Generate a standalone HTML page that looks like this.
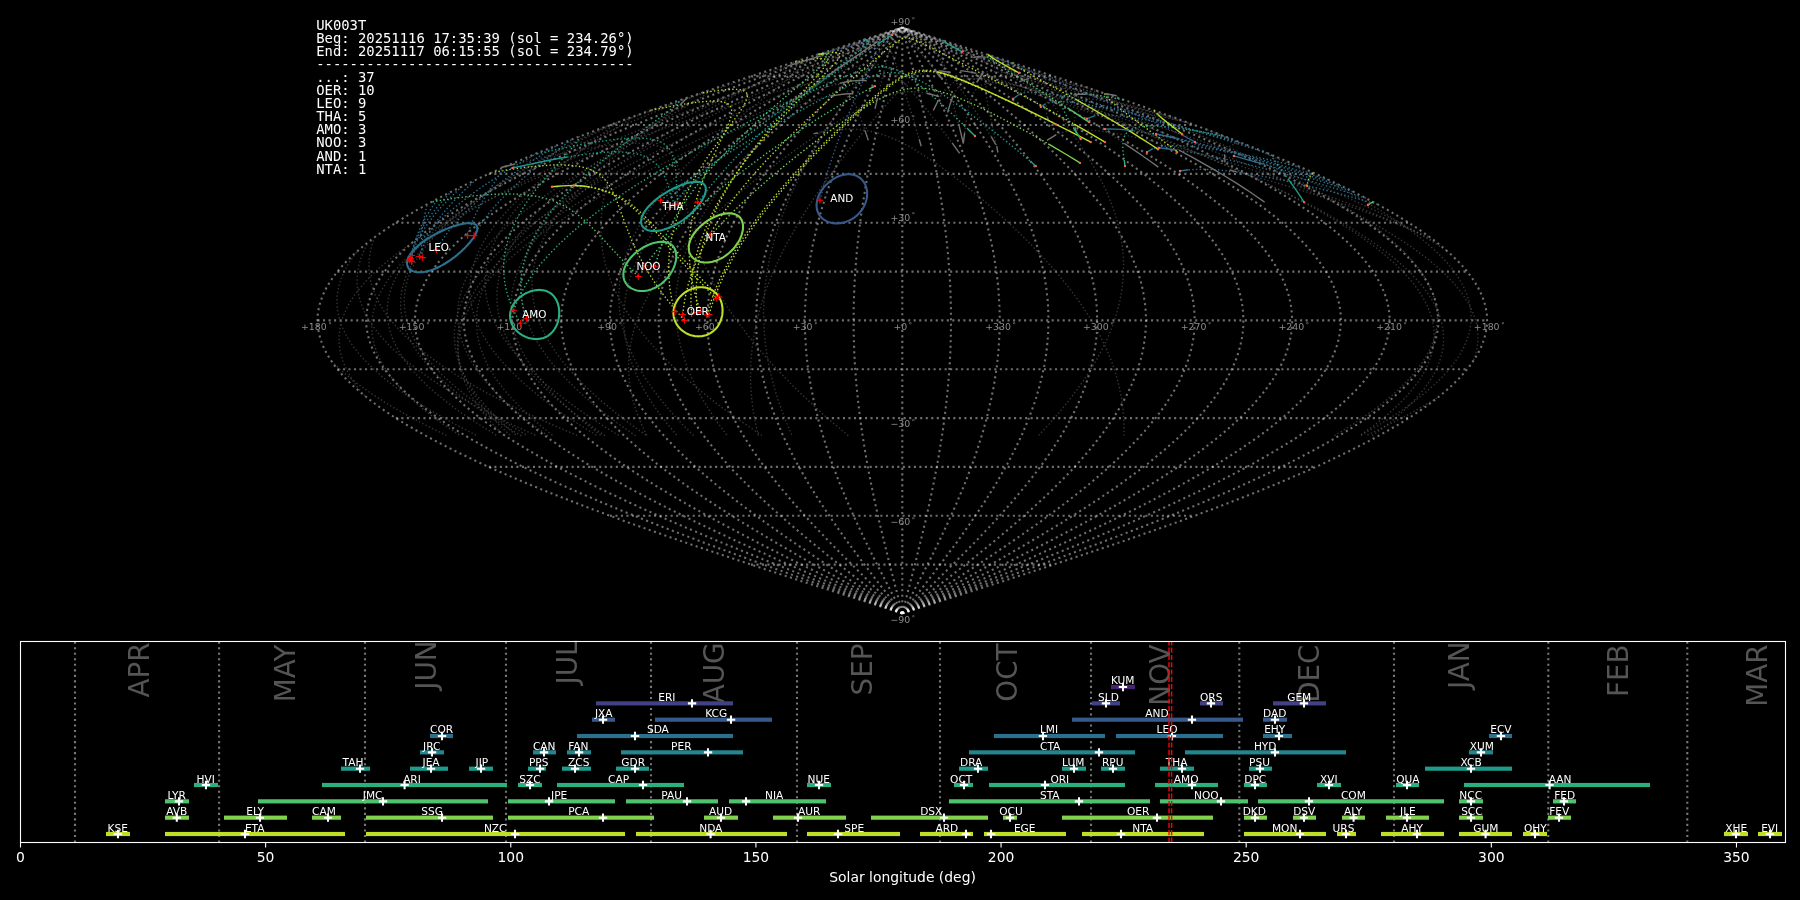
<!DOCTYPE html>
<html><head><meta charset="utf-8"><title>UK003T shower association</title>
<style>html,body{margin:0;padding:0;background:#000;overflow:hidden}svg{display:block;will-change:transform}</style></head>
<body>
<svg width="1800" height="900" viewBox="0 0 1800 900">
<rect width="1800" height="900" fill="#000"/>
<g fill="none" stroke="#fff" stroke-opacity="0.43" stroke-width="2.08" stroke-dasharray="2.08 3.44">
<path d="M902.3 613.4L1003.9 580.9L1063.5 561.3L1121.4 541.8L1176.9 522.3L1212.2 509.2L1229.3 502.7L1262.4 489.7L1278.2 483.2L1308.6 470.2L1323 463.7L1350.3 450.6L1363.1 444.1L1375.4 437.6L1387.1 431.1L1398.3 424.6L1408.8 418.1L1418.7 411.6L1427.9 405.1L1436.6 398.5L1444.5 392L1451.9 385.5L1458.5 379L1464.5 372.5L1469.7 366L1474.3 359.5L1478.2 353L1481.4 346.4L1483.9 339.9L1485.7 333.4L1486.8 326.9L1487.1 320.4L1486.8 313.9L1485.7 307.4L1483.9 300.9L1481.4 294.4L1478.2 287.8L1474.3 281.3L1469.7 274.8L1464.5 268.3L1458.5 261.8L1451.9 255.3L1444.5 248.8L1436.6 242.3L1427.9 235.7L1418.7 229.2L1408.8 222.7L1398.3 216.2L1387.1 209.7L1375.4 203.2L1363.1 196.7L1350.3 190.2L1323 177.1L1308.6 170.6L1278.2 157.6L1262.4 151.1L1229.3 138.1L1212.2 131.6L1176.9 118.5L1121.4 99L1063.5 79.5L1003.9 59.9L902.3 27.4"/>
<path d="M902.3 613.4L995.4 580.9L1050.1 561.3L1103.1 541.8L1154 522.3L1186.4 509.2L1202.1 502.7L1232.3 489.7L1246.9 483.2L1274.7 470.2L1287.9 463.7L1313 450.6L1324.7 444.1L1336 437.6L1346.7 431.1L1356.9 424.6L1366.6 418.1L1375.6 411.6L1384.1 405.1L1392 398.5L1399.3 392L1406.1 385.5L1412.1 379L1417.6 372.5L1422.5 366L1426.7 359.5L1430.2 353L1433.2 346.4L1435.4 339.9L1437.1 333.4L1438.1 326.9L1438.4 320.4L1438.1 313.9L1437.1 307.4L1435.4 300.9L1433.2 294.4L1430.2 287.8L1426.7 281.3L1422.5 274.8L1417.6 268.3L1412.1 261.8L1406.1 255.3L1399.3 248.8L1392 242.3L1384.1 235.7L1375.6 229.2L1366.6 222.7L1356.9 216.2L1346.7 209.7L1336 203.2L1324.7 196.7L1313 190.2L1287.9 177.1L1274.7 170.6L1246.9 157.6L1232.3 151.1L1202.1 138.1L1186.4 131.6L1154 118.5L1103.1 99L1050.1 79.5L995.4 59.9L902.3 27.4"/>
<path d="M902.3 613.4L986.9 580.9L1036.6 561.3L1084.9 541.8L1131.1 522.3L1160.6 509.2L1174.8 502.7L1202.3 489.7L1215.6 483.2L1240.8 470.2L1252.9 463.7L1275.6 450.6L1286.3 444.1L1296.6 437.6L1306.3 431.1L1315.6 424.6L1324.4 418.1L1332.6 411.6L1340.3 405.1L1347.5 398.5L1354.2 392L1360.3 385.5L1365.8 379L1370.8 372.5L1375.2 366L1379 359.5L1382.2 353L1384.9 346.4L1387 339.9L1388.5 333.4L1389.4 326.9L1389.7 320.4L1389.4 313.9L1388.5 307.4L1387 300.9L1384.9 294.4L1382.2 287.8L1379 281.3L1375.2 274.8L1370.8 268.3L1365.8 261.8L1360.3 255.3L1354.2 248.8L1347.5 242.3L1340.3 235.7L1332.6 229.2L1324.4 222.7L1315.6 216.2L1306.3 209.7L1296.6 203.2L1286.3 196.7L1275.6 190.2L1252.9 177.1L1240.8 170.6L1215.6 157.6L1202.3 151.1L1174.8 138.1L1160.6 131.6L1131.1 118.5L1084.9 99L1036.6 79.5L986.9 59.9L902.3 27.4"/>
<path d="M902.3 613.4L978.5 580.9L1023.2 561.3L1066.6 541.8L1108.2 522.3L1134.7 509.2L1147.6 502.7L1172.3 489.7L1184.2 483.2L1207 470.2L1217.8 463.7L1238.3 450.6L1257.1 437.6L1265.9 431.1L1274.3 424.6L1282.2 418.1L1289.6 411.6L1296.5 405.1L1303 398.5L1309 392L1314.5 385.5L1319.4 379L1323.9 372.5L1327.9 366L1331.3 359.5L1334.3 353L1336.6 346.4L1338.5 339.9L1339.8 333.4L1340.6 326.9L1340.9 320.4L1340.6 313.9L1339.8 307.4L1338.5 300.9L1336.6 294.4L1334.3 287.8L1331.3 281.3L1327.9 274.8L1323.9 268.3L1319.4 261.8L1314.5 255.3L1309 248.8L1303 242.3L1296.5 235.7L1289.6 229.2L1282.2 222.7L1274.3 216.2L1265.9 209.7L1257.1 203.2L1238.3 190.2L1217.8 177.1L1207 170.6L1184.2 157.6L1172.3 151.1L1147.6 138.1L1134.7 131.6L1108.2 118.5L1066.6 99L1023.2 79.5L978.5 59.9L902.3 27.4"/>
<path d="M902.3 613.4L970 580.9L1009.8 561.3L1048.4 541.8L1085.3 522.3L1108.9 509.2L1120.3 502.7L1142.3 489.7L1152.9 483.2L1173.1 470.2L1182.8 463.7L1201 450.6L1217.7 437.6L1225.5 431.1L1232.9 424.6L1239.9 418.1L1246.5 411.6L1252.7 405.1L1258.5 398.5L1263.8 392L1268.7 385.5L1273.1 379L1277.1 372.5L1280.6 366L1283.7 359.5L1286.3 353L1288.4 346.4L1290 339.9L1291.2 333.4L1291.9 326.9L1292.2 320.4L1291.9 313.9L1291.2 307.4L1290 300.9L1288.4 294.4L1286.3 287.8L1283.7 281.3L1280.6 274.8L1277.1 268.3L1273.1 261.8L1268.7 255.3L1263.8 248.8L1258.5 242.3L1252.7 235.7L1246.5 229.2L1239.9 222.7L1232.9 216.2L1225.5 209.7L1217.7 203.2L1201 190.2L1182.8 177.1L1173.1 170.6L1152.9 157.6L1142.3 151.1L1120.3 138.1L1108.9 131.6L1085.3 118.5L1048.4 99L1009.8 79.5L970 59.9L902.3 27.4"/>
<path d="M902.3 613.4L961.5 580.9L996.3 561.3L1030.1 541.8L1062.5 522.3L1093.1 502.7L1112.3 489.7L1121.6 483.2L1139.3 470.2L1147.7 463.7L1163.6 450.6L1178.3 437.6L1185.1 431.1L1191.6 424.6L1197.7 418.1L1203.5 411.6L1208.9 405.1L1214 398.5L1218.6 392L1222.9 385.5L1226.7 379L1230.2 372.5L1233.3 366L1236 359.5L1238.3 353L1240.1 346.4L1241.6 339.9L1242.6 333.4L1243.2 326.9L1243.4 320.4L1243.2 313.9L1242.6 307.4L1241.6 300.9L1240.1 294.4L1238.3 287.8L1236 281.3L1233.3 274.8L1230.2 268.3L1226.7 261.8L1222.9 255.3L1218.6 248.8L1214 242.3L1208.9 235.7L1203.5 229.2L1197.7 222.7L1191.6 216.2L1185.1 209.7L1178.3 203.2L1163.6 190.2L1147.7 177.1L1139.3 170.6L1121.6 157.6L1112.3 151.1L1093.1 138.1L1062.5 118.5L1030.1 99L996.3 79.5L961.5 59.9L902.3 27.4"/>
<path d="M902.3 613.4L953.1 580.9L982.9 561.3L1011.8 541.8L1039.6 522.3L1065.8 502.7L1082.3 489.7L1090.3 483.2L1105.4 470.2L1112.6 463.7L1126.3 450.6L1138.9 437.6L1144.7 431.1L1155.5 418.1L1160.5 411.6L1165.1 405.1L1169.4 398.5L1173.4 392L1177.1 385.5L1180.4 379L1183.4 372.5L1186 366L1188.3 359.5L1190.3 353L1191.9 346.4L1193.1 339.9L1194 333.4L1194.5 326.9L1194.7 320.4L1194.5 313.9L1194 307.4L1193.1 300.9L1191.9 294.4L1190.3 287.8L1188.3 281.3L1186 274.8L1183.4 268.3L1180.4 261.8L1177.1 255.3L1173.4 248.8L1169.4 242.3L1165.1 235.7L1160.5 229.2L1155.5 222.7L1144.7 209.7L1138.9 203.2L1126.3 190.2L1112.6 177.1L1105.4 170.6L1090.3 157.6L1082.3 151.1L1065.8 138.1L1039.6 118.5L1011.8 99L982.9 79.5L953.1 59.9L902.3 27.4"/>
<path d="M902.3 613.4L944.6 580.9L969.5 561.3L993.6 541.8L1016.7 522.3L1038.6 502.7L1052.3 489.7L1058.9 483.2L1071.6 470.2L1077.6 463.7L1089 450.6L1099.4 437.6L1104.3 431.1L1113.3 418.1L1121.3 405.1L1124.9 398.5L1128.2 392L1131.3 385.5L1134 379L1136.5 372.5L1138.7 366L1140.7 359.5L1142.3 353L1143.6 346.4L1144.6 339.9L1145.4 333.4L1145.8 326.9L1146 320.4L1145.8 313.9L1145.4 307.4L1144.6 300.9L1143.6 294.4L1142.3 287.8L1140.7 281.3L1138.7 274.8L1136.5 268.3L1134 261.8L1131.3 255.3L1128.2 248.8L1124.9 242.3L1121.3 235.7L1113.3 222.7L1104.3 209.7L1099.4 203.2L1089 190.2L1077.6 177.1L1071.6 170.6L1058.9 157.6L1052.3 151.1L1038.6 138.1L1016.7 118.5L993.6 99L969.5 79.5L944.6 59.9L902.3 27.4"/>
<path d="M902.3 613.4L936.2 580.9L956 561.3L975.3 541.8L993.8 522.3L1011.3 502.7L1027.6 483.2L1037.7 470.2L1042.5 463.7L1051.6 450.6L1060 437.6L1063.9 431.1L1071.1 418.1L1077.5 405.1L1080.4 398.5L1085.5 385.5L1089.7 372.5L1091.4 366L1094.3 353L1096.2 339.9L1096.8 333.4L1097.2 320.4L1096.8 307.4L1096.2 300.9L1094.3 287.8L1091.4 274.8L1089.7 268.3L1085.5 255.3L1080.4 242.3L1077.5 235.7L1071.1 222.7L1063.9 209.7L1060 203.2L1051.6 190.2L1042.5 177.1L1037.7 170.6L1027.6 157.6L1011.3 138.1L993.8 118.5L975.3 99L956 79.5L936.2 59.9L902.3 27.4"/>
<path d="M902.3 613.4L927.7 580.9L942.6 561.3L957.1 541.8L970.9 522.3L984.1 502.7L996.3 483.2L1007.5 463.7L1014.3 450.6L1020.6 437.6L1023.5 431.1L1028.9 418.1L1033.7 405.1L1035.9 398.5L1039.7 385.5L1042.8 372.5L1044.2 366L1046.3 353L1047.7 339.9L1048.1 333.4L1048.5 320.4L1048.1 307.4L1047.7 300.9L1046.3 287.8L1044.2 274.8L1042.8 268.3L1039.7 255.3L1035.9 242.3L1033.7 235.7L1028.9 222.7L1023.5 209.7L1020.6 203.2L1014.3 190.2L1007.5 177.1L996.3 157.6L984.1 138.1L970.9 118.5L957.1 99L942.6 79.5L927.7 59.9L902.3 27.4"/>
<path d="M902.3 613.4L929.2 561.3L938.8 541.8L948.1 522.3L956.8 502.7L965 483.2L972.4 463.7L977 450.6L983.1 431.1L986.7 418.1L991.3 398.5L993.9 385.5L996.9 366L998.3 353L999.5 333.4L999.8 320.4L999.5 307.4L998.3 287.8L996.9 274.8L993.9 255.3L991.3 242.3L986.7 222.7L983.1 209.7L977 190.2L972.4 177.1L965 157.6L956.8 138.1L948.1 118.5L938.8 99L929.2 79.5L902.3 27.4"/>
<path d="M902.3 613.4L915.7 561.3L925.2 522.3L929.6 502.7L933.6 483.2L937.4 463.7L939.6 450.6L942.7 431.1L944.5 418.1L946.8 398.5L948.1 385.5L949.6 366L950.3 353L950.9 333.4L951 320.4L950.9 307.4L950.3 287.8L949.6 274.8L948.1 255.3L946.8 242.3L944.5 222.7L942.7 209.7L939.6 190.2L937.4 177.1L933.6 157.6L929.6 138.1L925.2 118.5L915.7 79.5L902.3 27.4"/>
<path d="M902.3 613.4L902.3 27.4"/>
<path d="M902.3 613.4L888.9 561.3L879.4 522.3L875 502.7L871 483.2L867.2 463.7L865 450.6L861.9 431.1L860.1 418.1L857.8 398.5L856.5 385.5L855 366L854.3 353L853.7 333.4L853.6 320.4L853.7 307.4L854.3 287.8L855 274.8L856.5 255.3L857.8 242.3L860.1 222.7L861.9 209.7L865 190.2L867.2 177.1L871 157.6L875 138.1L879.4 118.5L888.9 79.5L902.3 27.4"/>
<path d="M902.3 613.4L875.4 561.3L865.8 541.8L856.5 522.3L847.8 502.7L839.6 483.2L832.2 463.7L827.6 450.6L821.5 431.1L817.9 418.1L813.3 398.5L810.7 385.5L807.7 366L806.3 353L805.1 333.4L804.8 320.4L805.1 307.4L806.3 287.8L807.7 274.8L810.7 255.3L813.3 242.3L817.9 222.7L821.5 209.7L827.6 190.2L832.2 177.1L839.6 157.6L847.8 138.1L856.5 118.5L865.8 99L875.4 79.5L902.3 27.4"/>
<path d="M902.3 613.4L876.9 580.9L862 561.3L847.5 541.8L833.7 522.3L820.5 502.7L808.3 483.2L797.1 463.7L790.3 450.6L784 437.6L781.1 431.1L775.7 418.1L770.9 405.1L768.7 398.5L764.9 385.5L761.8 372.5L760.4 366L758.3 353L756.9 339.9L756.5 333.4L756.1 320.4L756.5 307.4L756.9 300.9L758.3 287.8L760.4 274.8L761.8 268.3L764.9 255.3L768.7 242.3L770.9 235.7L775.7 222.7L781.1 209.7L784 203.2L790.3 190.2L797.1 177.1L808.3 157.6L820.5 138.1L833.7 118.5L847.5 99L862 79.5L876.9 59.9L902.3 27.4"/>
<path d="M902.3 613.4L868.4 580.9L848.6 561.3L829.3 541.8L810.8 522.3L793.3 502.7L777 483.2L766.9 470.2L762.1 463.7L753 450.6L744.6 437.6L740.7 431.1L733.5 418.1L727.1 405.1L724.2 398.5L719.1 385.5L714.9 372.5L713.2 366L710.3 353L708.4 339.9L707.8 333.4L707.4 320.4L707.8 307.4L708.4 300.9L710.3 287.8L713.2 274.8L714.9 268.3L719.1 255.3L724.2 242.3L727.1 235.7L733.5 222.7L740.7 209.7L744.6 203.2L753 190.2L762.1 177.1L766.9 170.6L777 157.6L793.3 138.1L810.8 118.5L829.3 99L848.6 79.5L868.4 59.9L902.3 27.4"/>
<path d="M902.3 613.4L860 580.9L835.1 561.3L811 541.8L787.9 522.3L766 502.7L752.3 489.7L745.7 483.2L733 470.2L727 463.7L715.6 450.6L705.2 437.6L700.3 431.1L691.3 418.1L683.3 405.1L679.7 398.5L676.4 392L673.3 385.5L670.6 379L668.1 372.5L665.9 366L663.9 359.5L662.3 353L661 346.4L660 339.9L659.2 333.4L658.8 326.9L658.6 320.4L658.8 313.9L659.2 307.4L660 300.9L661 294.4L662.3 287.8L663.9 281.3L665.9 274.8L668.1 268.3L670.6 261.8L673.3 255.3L676.4 248.8L679.7 242.3L683.3 235.7L691.3 222.7L700.3 209.7L705.2 203.2L715.6 190.2L727 177.1L733 170.6L745.7 157.6L752.3 151.1L766 138.1L787.9 118.5L811 99L835.1 79.5L860 59.9L902.3 27.4"/>
<path d="M902.3 613.4L851.5 580.9L821.7 561.3L792.8 541.8L765 522.3L738.8 502.7L722.3 489.7L714.3 483.2L699.2 470.2L692 463.7L678.3 450.6L665.7 437.6L659.9 431.1L649.1 418.1L644.1 411.6L639.5 405.1L635.2 398.5L631.2 392L627.5 385.5L624.2 379L621.2 372.5L618.6 366L616.3 359.5L614.3 353L612.7 346.4L611.5 339.9L610.6 333.4L610.1 326.9L609.9 320.4L610.1 313.9L610.6 307.4L611.5 300.9L612.7 294.4L614.3 287.8L616.3 281.3L618.6 274.8L621.2 268.3L624.2 261.8L627.5 255.3L631.2 248.8L635.2 242.3L639.5 235.7L644.1 229.2L649.1 222.7L659.9 209.7L665.7 203.2L678.3 190.2L692 177.1L699.2 170.6L714.3 157.6L722.3 151.1L738.8 138.1L765 118.5L792.8 99L821.7 79.5L851.5 59.9L902.3 27.4"/>
<path d="M902.3 613.4L843.1 580.9L808.3 561.3L774.5 541.8L742.1 522.3L711.5 502.7L692.3 489.7L683 483.2L665.3 470.2L656.9 463.7L641 450.6L626.3 437.6L619.5 431.1L613 424.6L606.9 418.1L601.1 411.6L595.7 405.1L590.6 398.5L586 392L581.7 385.5L577.9 379L574.4 372.5L571.3 366L568.6 359.5L566.3 353L564.5 346.4L563 339.9L562 333.4L561.4 326.9L561.2 320.4L561.4 313.9L562 307.4L563 300.9L564.5 294.4L566.3 287.8L568.6 281.3L571.3 274.8L574.4 268.3L577.9 261.8L581.7 255.3L586 248.8L590.6 242.3L595.7 235.7L601.1 229.2L606.9 222.7L613 216.2L619.5 209.7L626.3 203.2L641 190.2L656.9 177.1L665.3 170.6L683 157.6L692.3 151.1L711.5 138.1L742.1 118.5L774.5 99L808.3 79.5L843.1 59.9L902.3 27.4"/>
<path d="M902.3 613.4L834.6 580.9L794.8 561.3L756.2 541.8L719.3 522.3L695.7 509.2L684.3 502.7L662.3 489.7L651.7 483.2L631.5 470.2L621.8 463.7L603.6 450.6L586.9 437.6L579.1 431.1L571.7 424.6L564.7 418.1L558.1 411.6L551.9 405.1L546.1 398.5L540.8 392L535.9 385.5L531.5 379L527.5 372.5L524 366L520.9 359.5L518.3 353L516.2 346.4L514.6 339.9L513.4 333.4L512.7 326.9L512.4 320.4L512.7 313.9L513.4 307.4L514.6 300.9L516.2 294.4L518.3 287.8L520.9 281.3L524 274.8L527.5 268.3L531.5 261.8L535.9 255.3L540.8 248.8L546.1 242.3L551.9 235.7L558.1 229.2L564.7 222.7L571.7 216.2L579.1 209.7L586.9 203.2L603.6 190.2L621.8 177.1L631.5 170.6L651.7 157.6L662.3 151.1L684.3 138.1L695.7 131.6L719.3 118.5L756.2 99L794.8 79.5L834.6 59.9L902.3 27.4"/>
<path d="M902.3 613.4L826.1 580.9L781.4 561.3L738 541.8L696.4 522.3L669.9 509.2L657 502.7L632.3 489.7L620.4 483.2L597.6 470.2L586.8 463.7L566.3 450.6L547.5 437.6L538.7 431.1L530.3 424.6L522.4 418.1L515 411.6L508.1 405.1L501.6 398.5L495.6 392L490.1 385.5L485.2 379L480.7 372.5L476.7 366L473.3 359.5L470.3 353L468 346.4L466.1 339.9L464.8 333.4L464 326.9L463.7 320.4L464 313.9L464.8 307.4L466.1 300.9L468 294.4L470.3 287.8L473.3 281.3L476.7 274.8L480.7 268.3L485.2 261.8L490.1 255.3L495.6 248.8L501.6 242.3L508.1 235.7L515 229.2L522.4 222.7L530.3 216.2L538.7 209.7L547.5 203.2L566.3 190.2L586.8 177.1L597.6 170.6L620.4 157.6L632.3 151.1L657 138.1L669.9 131.6L696.4 118.5L738 99L781.4 79.5L826.1 59.9L902.3 27.4"/>
<path d="M902.3 613.4L817.7 580.9L768 561.3L719.7 541.8L673.5 522.3L644 509.2L629.8 502.7L602.3 489.7L589 483.2L563.8 470.2L551.7 463.7L529 450.6L518.3 444.1L508 437.6L498.3 431.1L489 424.6L480.2 418.1L472 411.6L464.3 405.1L457.1 398.5L450.4 392L444.3 385.5L438.8 379L433.8 372.5L429.4 366L425.6 359.5L422.4 353L419.7 346.4L417.6 339.9L416.1 333.4L415.2 326.9L414.9 320.4L415.2 313.9L416.1 307.4L417.6 300.9L419.7 294.4L422.4 287.8L425.6 281.3L429.4 274.8L433.8 268.3L438.8 261.8L444.3 255.3L450.4 248.8L457.1 242.3L464.3 235.7L472 229.2L480.2 222.7L489 216.2L498.3 209.7L508 203.2L518.3 196.7L529 190.2L551.7 177.1L563.8 170.6L589 157.6L602.3 151.1L629.8 138.1L644 131.6L673.5 118.5L719.7 99L768 79.5L817.7 59.9L902.3 27.4"/>
<path d="M902.3 613.4L809.2 580.9L754.5 561.3L701.5 541.8L650.6 522.3L618.2 509.2L602.5 502.7L572.3 489.7L557.7 483.2L529.9 470.2L516.7 463.7L491.6 450.6L479.9 444.1L468.6 437.6L457.9 431.1L447.7 424.6L438 418.1L429 411.6L420.5 405.1L412.6 398.5L405.3 392L398.5 385.5L392.5 379L387 372.5L382.1 366L377.9 359.5L374.4 353L371.4 346.4L369.2 339.9L367.5 333.4L366.5 326.9L366.2 320.4L366.5 313.9L367.5 307.4L369.2 300.9L371.4 294.4L374.4 287.8L377.9 281.3L382.1 274.8L387 268.3L392.5 261.8L398.5 255.3L405.3 248.8L412.6 242.3L420.5 235.7L429 229.2L438 222.7L447.7 216.2L457.9 209.7L468.6 203.2L479.9 196.7L491.6 190.2L516.7 177.1L529.9 170.6L557.7 157.6L572.3 151.1L602.5 138.1L618.2 131.6L650.6 118.5L701.5 99L754.5 79.5L809.2 59.9L902.3 27.4"/>
<path d="M902.3 613.4L800.7 580.9L741.1 561.3L683.2 541.8L627.7 522.3L592.4 509.2L575.3 502.7L542.2 489.7L526.4 483.2L496 470.2L481.6 463.7L454.3 450.6L441.5 444.1L429.2 437.6L417.5 431.1L406.3 424.6L395.8 418.1L385.9 411.6L376.7 405.1L368 398.5L360.1 392L352.7 385.5L346.1 379L340.1 372.5L334.9 366L330.3 359.5L326.4 353L323.2 346.4L320.7 339.9L318.9 333.4L317.8 326.9L317.5 320.4L317.8 313.9L318.9 307.4L320.7 300.9L323.2 294.4L326.4 287.8L330.3 281.3L334.9 274.8L340.1 268.3L346.1 261.8L352.7 255.3L360.1 248.8L368 242.3L376.7 235.7L385.9 229.2L395.8 222.7L406.3 216.2L417.5 209.7L429.2 203.2L441.5 196.7L454.3 190.2L481.6 177.1L496 170.6L526.4 157.6L542.2 151.1L575.3 138.1L592.4 131.6L627.7 118.5L683.2 99L741.1 79.5L800.7 59.9L902.3 27.4"/>
<path d="M750.9 564.6L1053.7 564.6"/>
<path d="M609.9 515.8L1194.7 515.8"/>
<path d="M488.8 466.9L1315.8 466.9"/>
<path d="M395.8 418.1L1408.8 418.1"/>
<path d="M337.4 369.2L1467.2 369.2"/>
<path d="M317.5 320.4L1487.1 320.4"/>
<path d="M337.4 271.6L1467.2 271.6"/>
<path d="M395.8 222.7L1408.8 222.7"/>
<path d="M488.8 173.9L1315.8 173.9"/>
<path d="M609.9 125L1194.7 125"/>
<path d="M750.9 76.2L1053.7 76.2"/>
</g>
<g font-family="'DejaVu Sans','Liberation Sans',sans-serif" font-size="9.4" fill="#8c8c8c" text-anchor="middle">
<text x="900.3" y="25.3">+90</text><text x="913.5" y="22.1" font-size="6.6">&#176;</text>
<text x="900.3" y="122.9">+60</text><text x="913.5" y="119.7" font-size="6.6">&#176;</text>
<text x="900.3" y="220.6">+30</text><text x="913.5" y="217.4" font-size="6.6">&#176;</text>
<text x="900.3" y="427.4">&#8722;30</text><text x="913.5" y="424.2" font-size="6.6">&#176;</text>
<text x="900.3" y="525.1">&#8722;60</text><text x="913.5" y="521.9" font-size="6.6">&#176;</text>
<text x="900.3" y="622.7">&#8722;90</text><text x="913.5" y="619.5" font-size="6.6">&#176;</text>
<text x="1486.7" y="330.0">+180</text><text x="1502.9" y="326.8" font-size="6.6">&#176;</text>
<text x="1389.0" y="330.0">+210</text><text x="1405.2" y="326.8" font-size="6.6">&#176;</text>
<text x="1291.3" y="330.0">+240</text><text x="1307.5" y="326.8" font-size="6.6">&#176;</text>
<text x="1193.5" y="330.0">+270</text><text x="1209.7" y="326.8" font-size="6.6">&#176;</text>
<text x="1095.8" y="330.0">+300</text><text x="1112.0" y="326.8" font-size="6.6">&#176;</text>
<text x="998.0" y="330.0">+330</text><text x="1014.2" y="326.8" font-size="6.6">&#176;</text>
<text x="900.3" y="330.0">+0</text><text x="910.5" y="326.8" font-size="6.6">&#176;</text>
<text x="802.6" y="330.0">+30</text><text x="815.8" y="326.8" font-size="6.6">&#176;</text>
<text x="704.8" y="330.0">+60</text><text x="718.0" y="326.8" font-size="6.6">&#176;</text>
<text x="607.1" y="330.0">+90</text><text x="620.3" y="326.8" font-size="6.6">&#176;</text>
<text x="509.3" y="330.0">+120</text><text x="525.5" y="326.8" font-size="6.6">&#176;</text>
<text x="411.6" y="330.0">+150</text><text x="427.8" y="326.8" font-size="6.6">&#176;</text>
<text x="313.9" y="330.0">+180</text><text x="330.1" y="326.8" font-size="6.6">&#176;</text>
</g>
<g fill="none" stroke-width="1.39" stroke-dasharray="1.39 2.29">
<path d="M1361 435.3L1377.9 425.6L1393.4 415.9L1407.7 406.2L1420.6 396.5L1432 386.8L1438 381.3L1442.1 377.1L1447.2 371.6L1450.7 367.4L1456.9 359.1L1460.4 353.5L1462.7 349.4L1465.3 343.9L1467 339.7L1468.8 334.2L1469.8 330L1470.5 325.8L1471 321.7L1471.1 317.5L1471 313.4L1470.6 309.2L1469.6 303.7L1468.6 299.5L1467.2 295.4L1465.6 291.2L1463 285.7L1458.2 277.4L1455.4 273.2L1451.2 267.7L1447.7 263.5L1442.7 258L1438.6 253.8L1432.7 248.3L1423 240L1410.4 230.3L1396.5 220.6L1381.2 210.9L1364.6 201.2L1346.8 191.5L1327.7 181.8L1307.6 172.1L1286.3 162.4L1260.8 151.4L1234 140.3L1206 129.3" stroke="#727272" stroke-opacity="0.47"/>
<path d="M602.2 127.9L641.5 114.1L686.3 99L732.3 83.9L787.5 66.2" stroke="#727272" stroke-opacity="0.47"/>
<path d="M676.6 435L667.3 423.9L658.8 412.8L651.2 401.7L645.2 392L639.3 380.9L634.3 369.8L630.2 358.7L627.5 349L625.3 337.9L624.1 328.2L623.7 318.5L623.8 312.9L624.2 307.4L625.4 297.7L627.7 286.6L631 275.5L635.2 264.4L639.7 254.7L645.7 243.6L651.6 233.8L659.3 222.8L667.9 211.7L677.2 200.6L687.4 189.5L698.3 178.4L709.9 167.3L723.8 154.8L736.9 143.7L752.2 131.2L768.2 118.7L786.7 104.9L805.9 91L827.5 75.8" stroke="#727272" stroke-opacity="0.47"/>
<path d="M510.1 435.1L503 428.6L497.7 423.4L488 412.9L483.6 407.6L479.5 402.4L475.8 397.1L472.4 391.8L469.3 386.5L466.6 381.2L464.2 375.9L462.2 370.6L460.5 365.3L459.2 360L458.3 354.6L457.8 350.7L457.5 345.3L457.5 340L457.8 336L458.5 330.7L459.5 325.4L460.9 320L462.7 314.7L464.8 309.4L469.3 300.1L472.4 294.8L475.9 289.4L479.6 284.1L483.8 278.8L488.2 273.5L493 268.2L503.6 257.6L509.4 252.3L517 245.7L530.2 235.1L546.5 223.3L564.1 211.5L583 199.8L603 188.1L624.1 176.6L651 162.6L681.5 147.7L712.6 133.2L743.9 119.4L776.9 105.5L803.1 95.3L814.2 91.2L824.7 87.7L832.6 85.3L840 83.3" stroke="#727272" stroke-opacity="0.47"/>
<path d="M503.9 435.4L497.5 429.1L492.8 424.1L484.1 413.9L480.2 408.8L476.6 403.7L473.3 398.6L470.3 393.5L467.6 388.3L465.3 383.2L463.2 378L461.5 372.8L460.2 367.6L459.2 362.5L458.5 357.3L458.2 353.4L458.1 348.2L458.4 343L459 337.8L459.7 333.9L460.9 328.7L462.5 323.5L464.4 318.3L466.6 313.1L469.2 307.9L472.1 302.7L475.3 297.5L478.9 292.3L482.8 287.1L487 281.9L496.4 271.6L507.1 261.2L512.8 256.1L520.5 249.6L535.3 238.1L551.4 226.6L568.8 215.2L587.4 203.8L606.9 192.6L629.7 180.3L655.7 167.1L684.9 153L714.4 139.5L746.1 125.8L771.8 115.4L796 106.4L814.1 100.5L823.4 97.9L830.4 96.2" stroke="#727272" stroke-opacity="0.47"/>
<path d="M1334.4 435.7L1345.8 428.7L1354.5 423.2L1370.7 412.1L1378.2 406.6L1385.2 401L1391.9 395.5L1398.1 389.9L1403.8 384.4L1409.1 378.8L1414 373.3L1418.4 367.7L1422.4 362.2L1425.9 356.6L1428.9 351.1L1431.5 345.6L1433.6 340L1435.2 334.5L1436.4 328.9L1437.1 323.4L1437.3 317.8L1437.1 312.3L1436.4 306.7L1435.2 301.2L1433.5 295.7L1431.4 290.1L1428.8 284.6L1425.7 279L1422.2 273.5L1418.2 267.9L1413.7 262.4L1408.8 256.8L1403.5 251.3L1397.7 245.7L1391.5 240.2L1384.8 234.7L1377.7 229.1L1370.2 223.6L1354 212.5L1336.2 201.4L1314.3 188.9L1293.3 177.8L1268 165.4L1244.2 154.3L1216 141.8L1186.4 129.4L1152 115.5L1116.3 101.7L1079.5 87.9L1034.2 71.4L984.7 53.8" stroke="#727272" stroke-opacity="0.47"/>
<path d="M824.2 52.4L878.8 36.5L887.2 34.5L889.1 34.3L890.4 34.3L891.3 34.6L891.8 35.1L892.1 36.8L891.9 38.8L891.2 42.4L877.5 97.9" stroke="#727272" stroke-opacity="0.47"/>
<path d="M1367.4 435L1388.9 424.6L1406.5 415.5L1423 406.3L1438.2 397.1" stroke="#727272" stroke-opacity="0.47"/>
<path d="M364.8 395.8L359.2 389.2L355.2 383.9L351.6 378.6L348.5 373.3L345.2 366.7L343.1 361.4L341.4 356.1L340.1 350.8L339.2 344.2L339 338.9L339.3 333.6L340 328.3L341.1 322.9L342.7 317.6L344.8 312.3L348 305.7L351.1 300.4L354.6 295.1L358.6 289.8L364.2 283.1L369.1 277.8L374.5 272.5L380.3 267.2L388.1 260.6L394.9 255.3L403.8 248.7L411.4 243.5L421.5 236.9L430 231.7L441 225.1L462.4 213.4L477.5 205.6L496 196.5L512.6 188.8L532.6 179.8L553.4 171L574.7 162.2L596.6 153.5L618.8 145L644.5 135.4L673.5 125L702 115.1L729.7 105.9L753.1 98.5L772 92.8L789.2 88.1L802.3 85L810 83.5L817 82.6L823.1 82.2L827.2 82.2L830.9 82.5L835.3 83.5L839 84.9L842.3 86.8L845.1 89.1L848.3 92.6L851 96.5L853.5 100.9L856.2 106.6L858.7 112.7L865 130.4" stroke="#727272" stroke-opacity="0.47"/>
<path d="M1124 435.8L1123.9 422.7L1123.1 410.5L1121.5 398L1118.9 385.3L1115.4 372.5L1111.3 360.8L1106.5 349L1100.2 336L1093.7 324.1L1085.6 311.1L1077.5 299.2L1067.7 286.2L1057.2 273.3L1045.9 260.5L1032.9 246.6L1019.3 232.9L1003.9 218.4L988 204.3L970.5 189.6L954.2 176.8L939.1 165.6L924.1 155.5L911.7 147.9L905.5 144.5L899.4 141.4L893.2 138.6L888.2 136.5L878.2 133.1L873.1 131.8L868 130.7L858.8 129.4L849.3 129L843.7 129.1L838 129.4L832.1 130.1L826.1 131L813.5 133.6" stroke="#727272" stroke-opacity="0.47"/>
<path d="M459.2 434.9L448.7 428L438.8 421.1L429.6 414.2L421 407.3L413.1 400.4L405.8 393.5L399.2 386.6L393.3 379.7L388.1 372.8L383.6 365.9L379.8 359L376.8 352.1L374.4 345.2L372.8 338.3L371.9 331.4L371.7 325.8L372 320.3L372.9 313.4L374.7 306.5L377.1 299.6L379.6 294.1L383.3 287.2L387.8 280.3L392.9 273.3L398.7 266.4L405.3 259.5L412.5 252.6L420.4 245.7L428.9 238.8L438.1 231.9L448 225L458.4 218.1L474 208.5L490.8 198.8L508.7 189.2L527.6 179.5L547.5 169.9L571.3 158.9L593.1 149.3L619 138.3L649.2 126L680.4 113.7L716 100.2L755.9 85.5L802.9 68.5L840.8 55.3L864.6 47.5L871.8 45.5L875.9 44.6L880.8 44.1L883.3 44.2L885.4 44.9L887 45.9L888.4 47.3L890.1 49.8L891.6 52.8L895.2 61.9L900.2 77.1L910.2 109.2L919.2 139.2" stroke="#727272" stroke-opacity="0.47"/>
<path d="M635.6 435.8L619.3 424.4L605.7 414.2L592.9 403.9L581.1 393.6L570.2 383.2L560.3 372.9L551.4 362.4L544.6 353.3L537.8 342.9L532.8 333.7L530.3 328.5L528.2 323.3L525.1 314.1L523.7 308.9L522.7 303.7L521.5 294.6L521.3 285.4L521.6 280.2L522.1 275L523.8 265.9L526.4 256.8L529.9 247.8L532.3 242.6L534.9 237.4L540.2 228.4L547.2 218.2L555.1 208L564 197.9L572.5 189.2L583 179.3L594.1 169.5L605.7 159.9L616.3 151.7L627 143.6L667.7 114.4L680 105" stroke="#727272" stroke-opacity="0.47"/>
<path d="M600.6 435.1L584.8 422.8L572 411.9L560.3 400.9L549.7 390L540.4 379.1L536.1 373.6L532.2 368.1L528.7 362.6L525.4 357.2L522.5 351.7L519.9 346.2L517.6 340.7L515.7 335.3L514 329.8L512.8 324.3L511.8 318.8L511.2 313.3L511 307.9L511 303.7L511.3 298.3L512 292.8L513 287.3L514.3 281.8L516 276.4L518 270.9L520.3 265.4L523 259.9L528.4 250.4L531.9 244.9L535.8 239.4L540 234L544.5 228.5L554.3 217.6L565.4 206.7L577.5 195.8L590.8 184.9L606.9 172.7L622.2 161.9L638.4 151.2L655.4 140.5L675.2 128.5L695.8 116.7L716.7 105.1L782.6 69.7L790.8 65.1L795.8 61.9" stroke="#727272" stroke-opacity="0.47"/>
<path d="M1007.6 61.2L995.4 58.8L985.8 57.3" stroke="#727272" stroke-opacity="0.47"/>
<path d="M552.4 435.1L543.6 428.2L535.3 421.2L527.5 414.3L521.7 408.8L514.9 401.8L509.8 396.3L503.9 389.3L499.6 383.8L494.7 376.9L491.2 371.3L487.4 364.4L484.7 358.8L481.9 351.9L480 346.4L478.3 339.4L477.3 333.9L476.6 326.9L476.4 321.4L476.6 315.8L477.4 308.9L478.5 303.4L480.4 296.4L482.3 290.9L485.2 283.9L488 278.4L491.9 271.5L495.5 265.9L500.4 259L504.8 253.4L510.8 246.5L515.9 240.9L522.9 234L533.4 224.3L546.7 213.2L559.4 203.5L575 192.4L591.8 181.3L609.7 170.2L628.6 159.1L651 146.6L671.9 135.5L696.4 123.1L721.7 110.6L750.8 96.7L780.8 82.9L814.4 67.7L861 47L893.8 32.8L898.3 31.1L899.8 30.9L901.1 31.2L902.1 31.9L904.2 34L908.7 39.1L934.2 69.2" stroke="#727272" stroke-opacity="0.47"/>
<path d="M758.3 435.5L755.5 423.5L753.5 412.8L751.9 400.7L751 389.9L750.5 377.8L750.7 367.1L751.3 356.3L752.4 345.5L754.1 334.7L756.2 323.9L758.9 313.1L762.4 300.9L766 290.1L770.7 278L775.9 265.9L781.6 253.8L790 237.6L799.2 221.6L810 204.2L821.6 187L834.8 168.6L849.6 149.1L864.7 130.1L880 111.9L891.1 99.3L900.1 89.8L907.1 83.3L911.2 80L914.2 77.7L917.4 75.8L920.6 74L923.9 72.7L926.2 71.9L929.8 71.1L932.3 70.8L936.3 70.6L939.2 70.7" stroke="#727272" stroke-opacity="0.47"/>
<path d="M1361.1 434.8L1375.7 424.2L1382.4 418.8L1388.8 413.5L1394.8 408.1L1400.3 402.8L1405.5 397.4L1410.2 392L1414.6 386.6L1418.5 381.3L1422 375.9L1425 370.5L1427.6 365.1L1429.8 359.7L1431.5 354.3L1432.8 348.9L1433.7 343.5L1434.1 338.1L1434.1 332.7L1433.8 328.7L1432.9 323.3L1431.7 317.9L1430 312.5L1427.8 307.1L1425.3 301.7L1422.2 296.3L1418.8 290.9L1414.9 285.5L1410.6 280.1L1405.8 274.7L1400.7 269.3L1395.1 263.9L1389.1 258.5L1382.7 253.1L1376 247.8L1368.8 242.4L1353.3 231.6L1345 226.3L1334.2 219.6L1313.3 207.6L1290.7 195.6L1266.7 183.7L1241.4 171.9L1211.8 158.8L1177.9 144.7L1139.8 129.5L1101.1 114.9L1059.8 99.9L1023.8 87.4L996.8 78.8L984.9 75.4L976.2 73.3" stroke="#727272" stroke-opacity="0.47"/>
<path d="M521.4 435.8L503.4 425.2L488.7 415.8L473.1 405.1L460.5 395.8L447.6 385L437.5 375.6L428.5 366.2L420.8 356.8L416.9 351.4L414.3 347.3L411.1 341.9L409 337.9L406.6 332.5L405 328.5L403.3 323.1L402.3 319L401.3 313.6L400.9 309.6L400.6 305.5L400.7 300.1L401 296.1L401.8 290.7L402.7 286.7L404.2 281.3L405.6 277.2L407.9 271.8L409.9 267.8L412.8 262.4L415.3 258.4L419 253L426.3 243.6L434.9 234.3L444.6 224.9L455.5 215.5L469.2 204.9L482.3 195.6L498.4 185.1L513.5 175.9L531.8 165.4L551.1 155L573.7 143.5L597 132.2L620.8 121.1" stroke="#727272" stroke-opacity="0.47"/>
<path d="M1180.3 119.9L1140.5 108.1L1097.9 96L1061.8 86.1L1033 78.8L1014.2 74.6L1005.1 72.9L999.2 72.1L994.1 71.6L989.8 71.5L986.2 71.8L983.3 72.5" stroke="#727272" stroke-opacity="0.47"/>
<path d="M605.1 435.8L588.2 423.9L574.2 413.4L561.2 402.8L549.3 392.2L538.5 381.6L528.9 370.9L524.5 365.6L520.5 360.3L514.1 350.9L510.9 345.6L508.1 340.3L505.5 334.9L503.3 329.6L501.4 324.2L499.8 318.9L498.6 313.5L497.9 309.5L497.2 304.2L497 300.2L496.9 294.8L497.1 289.5L497.6 285.5L498.4 280.2L499.6 274.8L501.1 269.5L504.4 260.2L506.8 254.9L509.5 249.6L515 240.3L518.5 235L522.4 229.7L531 219.1L540.7 208.6L551.5 198.2L563.3 187.8L574.4 178.7L587.9 168.5L602.1 158.3L618.9 147.1L632.3 138.5L645.9 130L701 97.4L709.6 92L715.5 88.1" stroke="#727272" stroke-opacity="0.47"/>
<path d="M1086 87.3L1064.5 82.9L1049.1 80.1L1036.9 78.6L1029.2 78.3" stroke="#727272" stroke-opacity="0.47"/>
<path d="M646.7 435.4L641.3 424L636.8 412.5L633.2 401L630.9 390.7L629.8 384.2L629.2 379L628.6 368.6L628.7 362.1L629 356.9L630.2 346.5L632.3 336L633.6 330.8L635.6 324.3L639.4 313.9L644.7 302.1L650.3 291.7L657.5 279.9L665.7 268.2L674.8 256.6L681.3 248.8L688.2 241.1L695.5 233.4L703.1 225.7L719.3 210.4L738 194L757.8 177.9L780 161L804.3 143.5L827.1 128.3L846.2 116.3L861.5 107.5L869 103.7L874.9 100.9L880.6 98.4L886.3 96.3L891.9 94.5L897.4 93.1L902.9 92.2L907 91.8L911.1 91.7L916.7 91.9L920.9 92.3L926.7 93.3" stroke="#727272" stroke-opacity="0.47"/>
<path d="M446.5 435.5L425.4 425L408 415.8L391.9 406.6L377 397.3L363.3 388L351 378.7L340 369.4L331.7 361.4" stroke="#727272" stroke-opacity="0.47"/>
<path d="M1473.7 360.1L1475.5 354.7L1476.5 350.7L1477.4 345.4L1477.8 341.4L1477.9 336.1L1477.7 332.1L1477.2 328.1L1476.2 322.7L1475 318.7L1473.2 313.4L1471.4 309.4L1468.7 304L1466.4 300L1462.9 294.7L1459.9 290.7L1455.6 285.4L1452.1 281.4L1447 276L1437 266.7L1425.7 257.4L1413.1 248.1L1399.3 238.8L1382 228.3L1365.7 219L1345.7 208.5L1332.5 202L1316.1 194.2L1301.8 187.7L1284.2 180L1266 172.3L1247.4 164.6L1208.8 149.5L1162.4 132.5L1115.8 116.2L1070.8 101.4L1049.7 94.9L1032.8 89.8L1012.4 84.3L997.2 80.9L989.6 79.6L984.6 79L978.6 78.7L974.7 78.9L971.2 79.4L967.2 80.5L964.6 81.7L961.7 83.8L959.7 85.6L957.4 88.4L955.5 91.5L953.3 95.8" stroke="#727272" stroke-opacity="0.47"/>
<path d="M1372.1 435.7L1381.3 429.1L1388.2 423.9L1396.2 417.3L1402.3 412L1409.3 405.4L1414.5 400.1L1419.2 394.8L1423.6 389.5L1428.4 382.9L1431.9 377.6L1434.8 372.2L1437.4 366.9L1440 360.2L1441.5 354.9L1442.7 349.6L1443.4 344.2L1443.6 338.9L1443.4 333.6L1442.8 328.2L1441.4 321.6L1439.7 316.2L1437.7 310.9L1435.1 305.5L1431.4 298.9L1427.9 293.5L1424 288.2L1419.7 282.9L1413.6 276.2L1408.4 270.9L1401.2 264.2L1395 258.9L1386.7 252.3L1375.9 244.3L1362.3 235.1L1349.8 227.1L1334.1 217.9L1317.5 208.7L1299.9 199.6L1281.5 190.5L1262.2 181.4L1242.2 172.4L1218.6 162.3L1194.3 152.2L1169.5 142.3L1144.4 132.6L1116 122.1L1088 112L1060.8 102.6L1027 91.6L1014.2 87.7L1002.4 84.4L991.6 81.8L983.9 80.2L977 79.2L970.9 78.8L965.5 78.9L960.8 79.6L956.7 80.9L954.9 81.7L952.3 83.2L948.5 86.2L945.2 89.8L941.6 94.8L938.3 100.4" stroke="#727272" stroke-opacity="0.47"/>
<path d="M496.2 435.1L478.3 424.1L461.8 413.2L446.9 402.2L435.1 392.6L428.9 387.1L423.1 381.6L414 372L409.4 366.5L405.2 361L401.4 355.5L398.9 351.3L395.9 345.8L393.3 340.3L391.2 334.8L389.9 330.7L388.6 325.2L387.9 321.1L387.3 315.6L387.2 311.4L387.3 307.3L387.9 301.8L388.9 296.3L390.4 290.8L391.8 286.7L394 281.2L396.7 275.7L399.8 270.2L402.4 266.1L406.3 260.6L409.5 256.5L414.1 251L423.2 241.3L429 235.9L435.2 230.4L446.9 220.8L461.9 209.8L478.3 198.8L496.2 187.9L515.4 177L535.9 166.1L557.6 155.2L583.3 143L610.2 130.9L638.1 118.8L670.1 105.6L702.4 92.6" stroke="#727272" stroke-opacity="0.47"/>
<path d="M1098.9 91.3L1027.2 70.5L1000.1 63L979.4 57.5L965 54L955.9 52.3L952.3 51.9L949.3 51.8L945.9 52.2L943.7 53.3L942.8 54.4L942.2 55.6L941.8 57.1L941.8 58.8L942.2 63.5L943.1 67.8L944.8 74.7L954.2 107.6L959.2 126.2" stroke="#727272" stroke-opacity="0.47"/>
<path d="M476 435.1L453.5 423.4L432.7 411.6L421.9 405.1L413.7 399.8L404 393.2L396.6 388L388 381.4L381.6 376.1L374.1 369.5L368.6 364.2L362.3 357.6L357.8 352.3L353.7 347L350 341.7L346.1 335.1L343.4 329.8L341.2 324.5L339.5 319.2L337.9 312.5L337.2 307.2L337 301.9L337.1 296.6L337.8 291.3L338.9 286L340.5 280.7L343 274.1L345.6 268.8L348.6 263.5L352.1 258.3L357 251.7" stroke="#727272" stroke-opacity="0.47"/>
<path d="M1446.2 250.4L1431.9 241.2L1416.4 232L1399.6 222.8L1379.1 212.4L1357.2 202L1334 191.7L1309.6 181.5L1284.2 171.4L1254.7 160.1L1224.3 149.1L1189.9 137.1L1155.4 125.6L1118.1 113.6L1085.6 103.7L1058.4 95.8L1034.2 89.4L1022.4 86.7L1013.8 85L1004.4 83.5L997.9 83L992.3 82.9L987.6 83.4L983.6 84.4L981.8 85.1L979.5 86.4L976.9 88.5L974.3 91.6L972.3 95.3L970.3 100.4L968.8 105.9L967.4 113L964.6 132.9" stroke="#727272" stroke-opacity="0.47"/>
<path d="M515.7 434.7L506.3 426.6L499 419.9L492.2 413.1L485.9 406.3L479.1 398.2L474.1 391.4L469.6 384.6L465.7 377.8L462.3 371.1L459.6 364.3L457.4 357.5L455.8 350.7L454.8 343.9L454.4 337.1L454.6 330.3L455.4 323.5L456.7 316.7L458.7 309.9L461.3 303.1L464.4 296.3L468.2 289.5L472.5 282.7L477.3 275.9L483.9 267.7L490 260.9L496.7 254.1L503.9 247.3L513.2 239.2L521.5 232.4L530.3 225.7L539.6 218.9L551.3 210.8L565.8 201.4L581.2 192L597.3 182.6L614.2 173.3L631.7 163.9L652.4 153.4L673.8 142.9L695.7 132.5L723.7 119.7L751.9 107.2L779.8 95.3L806.8 84.1L827 76.2L843 70.5L855.2 66.7L864 64.8L868.7 64.2L873 64L876.9 64.3L880.5 65.1L883.8 66.3L888.1 68.5L892.1 71.2L896 74.5L900.8 79.1L905.6 84.2L911.3 90.7L918.1 98.8L934.7 119.7L952.1 142.9" stroke="#727272" stroke-opacity="0.47"/>
<path d="M548.2 435.9L531 423.4L517.2 412.4L509.2 405.5L503.2 399.9L497.6 394.4L492.3 388.9L487.4 383.3L482.8 377.8L478.6 372.3L474.8 366.7L471.4 361.2L468.3 355.7L465.6 350.1L463.3 344.6L461.4 339.1L459.9 333.5L458.8 328L458 322.5L457.7 316.9L457.7 311.4L458.2 305.9L459 300.3L460.2 294.8L461.8 289.2L463.8 283.7L466.2 278.2L468.9 272.6L472.1 267.1L475.6 261.6L480.5 254.7L484.9 249.1L489.6 243.6L494.7 238.1L500.1 232.5L512 221.5L518.5 215.9L527.1 209L541.9 198L560 185.6L577.4 174.5L598.3 162.1L618 151.1L641.3 138.7L665.8 126.3L694 112.6L720.3 100.3L750.2 86.8L839.7 47.5" stroke="#727272" stroke-opacity="0.47"/>
<path d="M961.5 46.5L943.9 42.4L938.7 41.4L934.8 40.9L932.2 41L930.8 41.6L930.4 42.8L930.6 44.3L932.5 48L936.1 53.7L958.8 86.2L971.6 105.2L982.1 121.6L991.2 136.7" stroke="#727272" stroke-opacity="0.47"/>
<path d="M525.9 434.7L508 424.1L493.4 414.9L477.9 404.3L465.4 395L454 385.6L443.7 376.3L434.5 366.9L426.5 357.6L419.7 348.2L416.4 342.9L414.1 338.9L411.5 333.5L409.8 329.5L407.9 324.1L406.7 320.1L405.5 314.7L404.8 310.7L404.2 302.7L404.3 298.7L404.7 293.3L405.3 289.3L406.4 284L407.6 279.9L409.4 274.6L411.1 270.6L413.6 265.2L415.8 261.2L419 255.9L425.7 246.6L433.5 237.3L442.4 228L452.4 218.7L463.5 209.5L475.6 200.3L490.7 189.8L504.8 180.7L521.9 170.4L540 160.1L561.3 148.8L583.3 137.6L605.8 126.7" stroke="#727272" stroke-opacity="0.47"/>
<path d="M1195.8 125.5L1156.7 113.9L1118.5 103.1L1086 94.2L1056.4 86.5L1036.3 81.7L1019.4 78.4L1011.4 77.2L1006.2 76.7L1001.7 76.5L997.8 76.7L995.7 77L992.9 77.7L990.7 78.7L989 80.1L987.7 81.7L986.6 84.3L986.1 86.5L985.9 89.7L986.3 96L987.6 104.1L996.7 146.2" stroke="#727272" stroke-opacity="0.47"/>
<path d="M535.3 435.3L507.5 422.3L483.4 410.1L470.9 403.3L460.8 397.7L449.2 390.8L440 385.1L429.5 378.1L421.2 372.3L413.4 366.5L406 360.6L399.2 354.8L392.8 348.9L386.9 343L381.5 337.1L376.7 331.2L372.3 325.3L368.6 319.4L365.3 313.5L362.6 307.5L360.4 301.6L358.8 295.7L357.7 289.9L357.1 284L357.1 278.1L357.6 272.3L358.6 266.4L360.1 260.6L362.1 254.9L364.6 249.1L368.2 242.3" stroke="#727272" stroke-opacity="0.47"/>
<path d="M1434.5 241.1L1411.1 229.9L1386.1 218.8L1357 206.8L1326.8 195.3L1295.8 184.2L1261.7 172.7L1228 162L1195.3 152.4L1167.1 144.7L1143.4 139L1122 134.5L1112.2 132.8L1103.1 131.5L1094.7 130.6L1088.5 130.2L1082.7 130L1076.1 130.2L1071.2 130.6L1065.7 131.6L1060.7 132.9L1056.2 134.6" stroke="#727272" stroke-opacity="0.47"/>
<path d="M596.3 435.2L580.2 425.2L565 415.2L550.7 405L537.5 394.8L525.3 384.6L515.5 375.6L505.4 365.3L497.5 356.3L493.5 351.1L489.7 346L483.9 336.9L481.1 331.8L478.5 326.6L474.8 317.5L472.2 308.5L471.1 303.3L470.5 299.4L470.1 295.5L469.9 290.4L470 285.2L470.4 280L470.9 276.2L471.9 271L474.4 262L477.9 253L480.3 247.9L483 242.8L488.5 233.9L495.9 223.8L503.3 215L512.7 205L521.7 196.3L532.8 186.5L544.8 176.8L558.9 166.1L572 156.9L587.1 146.7L633.9 116.6" stroke="#727272" stroke-opacity="0.47"/>
<path d="M1169.1 115.8L1130 106.6L1112.6 102.9L1099.6 100.3L1088 98.4L1077.8 97L1069.2 96.3L1063.4 96.2L1058.6 96.5L1053.8 97.5L1052.3 98L1050.4 99.1L1049.3 99.9L1048 101.3L1047.4 102.3L1046.7 104L1046.2 105.9L1046.1 108L1046.4 112.5L1047.5 117.5" stroke="#727272" stroke-opacity="0.47"/>
<path d="M645.9 435.1L630 423.8L616.7 413.6L604.2 403.4L592.6 393.2L581.8 382.9L572 372.6L563.2 362.2L556.4 353.1L549.6 342.8L546.6 337.6L543.9 332.4L541.4 327.2L539.3 322L536.1 312.9L534.8 307.7L533.7 302.5L532.4 293.4L532 284.3L532.2 279.2L532.7 274L534.2 264.9L536.5 255.9L539.7 246.9L541.9 241.8L544.3 236.7L549.2 227.7L555.7 217.6L562.2 208.8L570.4 198.8L577.1 191.3L585.5 182.7L593.1 175.4L602.3 167L613.3 157.6L626 147.3L662.6 119.2L672.5 111.3L677 107.3L680.5 103.8L682.5 101.3L683.6 99.1" stroke="#727272" stroke-opacity="0.47"/>
<path d="M1119.9 98.7L1100.6 95.6L1092.6 94.7L1085.8 94.2" stroke="#727272" stroke-opacity="0.47"/>
<path d="M693.5 435.5L681.4 423.3L671.5 412.5L662.3 401.6L653.9 390.7L646.4 379.9L639.7 369L633.9 358.1L629.6 348.6L625.5 337.7L622.4 326.8L620.3 315.9L619.2 306.3L618.8 296.8L619 291.3L619.3 285.9L620.8 275L623.2 264.1L626.1 254.6L629.7 245.1L634 235.6L639 226.1L644.7 216.6L651 207.1L657.9 197.7L666.6 186.9L676 176.2L687.5 164.2L699.7 152.2L714 139.1L726 128.7L738.4 118.4L753.9 105.9L784.9 81.5L792.1 75.6L796.9 71.1L799.1 68.8L800.6 66.8L801.1 65.1L801 64.2L800.3 63.4L799.7 63.2L798.2 62.7L796 62.5L793.2 62.5" stroke="#727272" stroke-opacity="0.47"/>
<path d="M1011.4 62.6L1009 63.2L1008.2 63.9L1007.9 64.7L1008.1 65.7L1008.8 66.9L1009.9 68.2L1012.1 70.5L1017.2 74.8L1023.6 79.7L1051.7 100" stroke="#727272" stroke-opacity="0.47"/>
<path d="M1038.6 435.4L1049.2 423.9L1058.2 413.6L1067.7 401.9L1075.7 391.5L1083.1 381.1L1090 370.6L1096.3 360.2L1101.3 351L1106.4 340.5L1110.4 331.3L1114.3 320.8L1117.2 311.6L1119.8 301.1L1121.5 291.9L1122.7 282.7L1123.5 272.2L1123.6 263L1123.1 253.9L1122.1 244.8L1120.7 235.7L1118.7 226.7L1116.2 217.6L1113.3 208.7L1109.4 198.5L1105.6 189.6L1100.7 179.6L1096.1 170.9L1090.4 161.1L1080.7 145.7L1060.6 116.2L1054.2 105.9L1052.1 101.8L1050.9 98.8L1050.3 96.1L1050.4 93.8L1050.9 92.2L1051.6 91.3L1052.9 90.2L1054.2 89.6L1056.6 88.9L1058.5 88.5L1064.6 88.2L1071 88.5L1080.7 89.6L1092.3 91.3L1105.8 93.8" stroke="#727272" stroke-opacity="0.47"/>
<path d="M618.7 435.4L603.1 425.8L588.2 416L574.1 406.2L560.8 396.3L548.5 386.4L537.1 376.4L526.8 366.4L518.6 357.6L510.3 347.5L504 338.7L500.7 333.7L497.8 328.6L493.4 319.8L489.9 310.9L487.4 302.1L485.7 293.3L485.2 288.2L485 283.2L485.4 274.4L486.6 265.6L488.8 256.9L490.4 251.9L492.3 247L496.3 238.3L501.9 228.5L507.6 219.9L515 210.2L522.2 201.9L531.2 192.4L540.9 183.1L551.1 174L560.4 166.2L571.2 157.6L605.8 131.3L615.8 123.2" stroke="#727272" stroke-opacity="0.47"/>
<path d="M1187.4 122.5L1154.5 115.2L1138.7 112.1L1126.8 110.1L1116.1 108.5L1106.7 107.4L1098.7 107L1093.2 107L1088.5 107.4L1083.8 108.4L1080.1 109.9L1077.5 111.9L1075.8 114.4L1075.1 116.1L1074.7 118L1074.5 122.1L1075 126.7" stroke="#727272" stroke-opacity="0.47"/>
<path d="M726.7 434.9L717.5 422.5L710.1 411.4L703.3 400.4L697.2 389.3L691.9 378.3L687.2 367.2L683.4 356.2L680.3 345.1L678 334.1L676.4 323L675.7 312L675.7 302.3L676.4 291.2L678 280.2L680.3 269.1L683.4 258.1L686.8 248.4L690.7 238.7L695.2 229.1L700.3 219.4L705.9 209.7L712.9 198.7L719.6 189L727.8 178L737.8 165.6L749.7 151.9L762.5 138.1L777.3 123.1L790 110.8L804.5 97.3L820.8 82.6L849.7 57.1L854.6 52.6L858.6 48.6L860 46.9L860.8 45.5L860.9 44.4L860.6 43.9L860.1 43.6L858 43.4L856.5 43.4L850 44.2" stroke="#727272" stroke-opacity="0.47"/>
<path d="M955.9 44.7L957.2 46L959.4 47.5L967.5 52.4L1029 86.2L1066.8 107.8L1096.3 125.5L1111.5 135.1L1124.2 143.3" stroke="#727272" stroke-opacity="0.47"/>
<path d="M791.7 434.7L786.3 422.2L782 411.1L778.1 400L774.7 388.9L771.7 377.8L769.1 366.7L767.1 355.7L765.5 344.6L764.4 333.5L763.8 322.4L763.6 312.7L763.9 301.6L764.7 290.5L766 279.4L767.7 268.3L770 257.2L772.3 247.5L775 237.8L778.1 228.1L781.9 217L785.7 207.3L790.3 196.2L794.8 186.5L800.2 175.4L807.4 161.5L816 146.3L825.1 131L834.8 115.8L844.9 100.6L856.3 84L869.1 66L888.7 39L891.8 34.3L892.3 33.4L892.4 32.7L891.9 32.2L890.7 32.2L888.5 32.5L881.8 34" stroke="#727272" stroke-opacity="0.47"/>
<path d="M925.9 35.1L1017 73.9L1048.6 87.7L1076.4 100.1L1106.4 114L1132.4 126.4L1157.5 138.9L1178.8 150" stroke="#727272" stroke-opacity="0.47"/>
<path d="M761.9 435.5L739.7 420.4L719.6 405.8L700.5 390.7L691.4 383.1L682.6 375.3L674.2 367.6L667.3 360.9L659.6 353L653.3 346.3L646.4 338.3L640.9 331.6L634.9 323.6L630.1 316.8L624.3 307.8L619.7 299.8L615.2 290.8L611.2 281.8L608.3 274L605.6 265.1L603.6 256.3L602.1 247.6L601.4 241.1L601 233.6L600.9 226.3L601.2 219L602 210.9L603.2 202L604.6 193.5L608.1 175.9L609.3 168.1L609.6 163.7L609.6 159.7L609.2 156.6L608.3 153.7L607.4 151.7L606.4 150.2L603.9 147.6L601.7 146.2L599.7 145.2L595.1 143.7L589.3 142.6L582.2 142.1L574 142.1L564.4 142.6" stroke="#727272" stroke-opacity="0.47"/>
<path d="M1240.7 142.7L1237.9 143.2L1234.5 144.1L1231.8 145.2L1229.5 146.5L1227.7 148L1226.3 149.7L1225.3 151.6L1224.6 154.2" stroke="#727272" stroke-opacity="0.47"/>
<path d="M577.2 435.4L549.4 423.5L522.4 411.1L508.4 404.2L496.7 398.1L485.3 392.1L474.4 385.9L463.8 379.7L453.8 373.4L444.2 367.1L435.1 360.7L426.5 354.3L418.5 347.9L411 341.4L405.2 336L398.9 329.6L394 324.2L388.8 317.7L384.8 312.3L381.4 306.9L377.8 300.4L374.8 294L372.4 287.5L370.9 282.2L369.7 275.8L369.1 269.5L369 263.2L369.5 257L370.5 250.8L372 244.7L374.4 237.6" stroke="#727272" stroke-opacity="0.47"/>
<path d="M1428.4 236.6L1407.1 227.8L1385 219.1L1362.4 210.8L1336.8 201.8L1311 193.4L1285.5 185.5L1260.4 178.2L1236.2 171.7" stroke="#727272" stroke-opacity="0.47"/>
<path d="M848.3 435.7L829.4 419.8L810.9 403.1L793 385.9L777.1 369.4L762.1 352.7L754.5 343.7L748.2 335.8L736.4 320.1L730.9 312.2L725.7 304.3L718.2 291.9L711 278.5L704.6 265.2L699.3 252.1L696.6 244.5L694.1 237.1L690.1 222.5L686.7 207.4L681.5 180L679 169.6L676.9 163.9L674.3 158.7L671.4 154.7L667.8 151.3L664 148.7L660.3 147L655.2 145.3L650.2 144.3L643.4 143.5L637 143.2L629.8 143.4L620.3 144L611.5 144.9L600 146.4L576.4 150.4L547.2 156.5L515 164" stroke="#727272" stroke-opacity="0.47"/>
<path d="M691.6 313.6L690.9 301.1L691.1 289.3L692.2 276.8L694.3 264.4L697.3 251.9L701.3 239.4L706.1 226.9L712.1 213.7L716.3 205.7L720.8 197.6L725.6 189.6L730.8 181.6L736.2 173.6L742.5 164.8L749.1 156.1L756.1 147.4L768.9 132.3L783.1 116.6L799.8 99L829.6 68.9L834.8 63.3L838.3 58.9L839.7 56.4L840.1 54.7L839.9 53.9L839.5 53.5L837.8 52.7L834.7 52.5L831.3 52.7L820 54.3" stroke="#bddf26"/>
<path d="M706.9 315L709.4 306.2L712.4 297.5L715.7 288.7L719.5 280L723.7 271.2L728.7 261.7L733.6 253L739.4 243.5L745.7 234.1L752.3 224.7L759.3 215.3L766.6 205.9L774.3 196.6L782.9 186.5L791.8 176.5L801.6 165.9L813.1 154L825.6 141.5L838.3 129.2L851.8 116.6L863.8 105.7L875 96.1L884.6 88.3L892.7 82.3L898.6 78.3L904.6 75L909.8 72.7L914.6 71.3L919.4 70.4L924.6 70.1L930 70.5L936.7 71.7" stroke="#bddf26"/>
<path d="M709.1 314.5L711 308.1L713.3 300.8L718.6 287.2L724.8 273.5L732 259.8L740.1 246.2L749.7 231.7L760.1 217.3L772.2 202L787.3 184.1L803.5 166.4L822.1 147.2L841.3 128.4L861.5 109.7L878.8 94.7L885.6 89.3L892.2 84.3L898 80.4L902.9 77.5L907.8 75.1L912.8 73.2L917.9 71.9L922.3 71.4L927 71.3L933 71.9L939.4 73.2L946.2 75.1L954.9 78L964.2 81.5L975.4 86.1L988.8 92L1020.2 106.6L1056 124.3" stroke="#bddf26"/>
<path d="M682.7 314.5L683.5 307.8L684.7 300.1L686.3 292.4L688.2 284.8L690.3 278L692.9 270.4L695.9 262.7L699.2 255L702.9 247.3L706.9 239.7L711.3 232L715.9 224.3L720.9 216.6L726.9 208L732.5 200.3L739.2 191.7L752.7 175.4L768.3 158.2L786 140L805.7 120.9L831.7 97.1L863 69.7L879.2 56L890.7 46.6L896.5 42.1L901.1 39.2L903.8 38.1L905.6 37.8L907.6 37.9L909.7 38.2L912 38.9L915.8 40.5L927.9 46.1L966.1 65.5L1008.9 88L1043.9 107L1074.2 124.2" stroke="#bddf26"/>
<path d="M697.5 312.5L696.8 305.6L696.4 298.7L696.2 291.7L696.4 284.8L696.8 277.9L697.5 271L698.5 264.1L699.8 257.2L701.4 250.2L703.2 243.3L705.3 236.4L707.7 229.5L710.3 222.7L713.2 215.8L716.3 208.9L720.1 201.2L727.2 188.3L735.6 174.6L744.8 161L755.5 146.6L766.1 133.2L778.8 118.3L789.6 106.1L812.1 81.6L818.8 74L823.6 67.9L825.3 65.3L826.2 63.4L826.6 62.1L826.6 61L826.2 60.1L825.7 59.6L824.6 59L823.5 58.7L820.7 58.5L816.9 58.6L810.7 59.3L802.9 60.5L793.5 62.3" stroke="#bddf26"/>
<path d="M1011.5 62.7L1016.9 66.5L1026.7 72.3L1075.4 99.2" stroke="#bddf26"/>
<path d="M700.4 311.4L696.6 299.9L693.8 289.2L691.6 278.6L690 267.2L689.3 256.6L689.2 245.3L689.8 234.7L691.2 223.6L692.8 214.7L695 205.1L697.6 195.7L700.7 186.4L704.7 175.8L709.6 164.1L714.6 153.4L724.7 132.4L728.6 123.7L730.3 119.2L731.4 115L731.8 111.7L731.5 108.8L730.8 106.8L729.6 105.1L727.8 103.7L725.9 102.8L723 101.9L720.1 101.4L715.9 101.1L711.8 101L700.9 101.8L687.3 103.5L671.3 106.3L651.1 110.2" stroke="#bddf26"/>
<path d="M1154 110.6L1157.5 114.2" stroke="#bddf26"/>
<path d="M674.8 311.6L671.8 299.5L669.8 287.5L668.7 275.5L668.6 263.5L669.5 251.5L671.3 239.5L674 227.7L677.6 215.9L681.3 205.9L685.9 195.2L691.2 184.5L697.5 173.1L704.4 161.9L712.3 150.1L720.3 138.7L735.9 117.5L741 110.2L743.6 105.8L745.5 102.4L746.7 99.3L747.3 97L747.3 95.3L747 93.8L746.3 92.5L745.4 91.7L743.8 90.8L742.3 90.2L739.7 89.7L737.4 89.4L731.8 89.3L723.4 89.9L713.1 91.2L700.9 93.1" stroke="#bddf26"/>
<path d="M1104.7 93.4L1105.7 95.7L1107.8 98.3L1111.5 101.8L1116.2 105.8L1126.9 114L1159.1 137.8L1175 150" stroke="#bddf26"/>
<path d="M684.5 320.4L673.6 307.8L663.2 294.5L654 281.4L645.9 268.4L638.6 255.1L631.9 240.8L626.4 227L617 201.5L612.7 191.7L609.8 186.3L606.8 181.9L603.6 178.2L599.9 174.9L596.5 172.6L593.1 170.8L588.9 169L584.8 167.7L579.5 166.5L574.4 165.7L568.8 165.2L562.8 164.9L556.2 164.9L549 165.2L532 166.6L513.9 168.9L492.3 172.5" stroke="#bddf26"/>
<path d="M1312.7 172.7L1310.7 175.1L1309.2 177.7L1308 180.9L1307.3 184.5" stroke="#bddf26"/>
<path d="M716.3 298.4L704.3 286.4L692.5 273.8L678.7 258.4L649.2 224.2L640.9 215.5L633.6 208.5L628.5 204.3L623.5 200.6L618.5 197.5L613.3 194.6L607.7 192.1L602 190L596 188.3L590 187" stroke="#bddf26"/>
<path d="M718.5 296.2L705.3 282.9L692.2 269.1L680.5 256.1L658.7 231.2L650.2 221.9L640.7 212.5L636.2 208.4L631.8 204.9L625.6 200.5L619.3 196.8L612.6 193.6L605.8 191L598.4 188.8L590.8 187.3L582.6 186.2L573.8 185.5" stroke="#bddf26"/>
<path d="M411.8 255.5L415.5 249.4L419.7 243.4L424.4 237.3L429.6 231.3L435.2 225.3L441.9 218.7L448.5 212.7L456.1 206.3L464.3 199.8L472.9 193.4L481.9 187L491.3 180.7L502 173.9L512.9 167.2L536.6 153.5" stroke="#2d708e"/>
<path d="M1267 153L1220.6 138.4L1173.2 124.4L1128.2 111.8L1091.6 102.4L1077.6 99.2L1065.8 96.6L1055.2 94.6L1045.8 93.2L1037.6 92.3L1031.2 92.1L1025.8 92.4L1021 93.3" stroke="#2d708e"/>
<path d="M436.4 249.7L439.8 243.8L444 237.4L448.3 231.5L453.5 225.1L459.2 218.8L465.3 212.5L471.8 206.2L478.8 200L486.2 193.8L494.5 187.2L503.3 180.6L512.4 174.1L532.7 160.5L557.3 145.2" stroke="#2d708e"/>
<path d="M1246.6 144.8L1204.7 132.8L1164.7 122.1L1130.8 113.6L1115.3 110L1102.2 107.3L1091.2 105.2L1081.2 103.5L1072.3 102.4L1065.2 101.8L1059 101.7L1053.3 102L1048.9 102.8L1045 104.2" stroke="#2d708e"/>
<path d="M474.1 235.6L476.9 230.6L480.3 225.2L484 219.9L488 214.5L492.3 209.2L497.2 203.6L507.9 192.4L519.1 181.9L532.2 170.5L545.6 159.7L571 139.8" stroke="#2d708e"/>
<path d="M1232.7 139.5L1205.2 132.6L1180.6 126.9L1159.2 122.3L1141 118.9L1125.9 116.6L1113.1 115.3L1107.3 115L1102.5 115L1098.3 115.3L1094.2 115.8" stroke="#2d708e"/>
<path d="M410.6 258.6L411.8 254.4L413.4 249.8L417.2 241L422 232.3L427.9 223.4L435 214.1L443 205.1L452.1 195.8L462.6 186.1" stroke="#2d708e"/>
<path d="M1341.1 185.8L1310 175.8L1279.1 166.3L1247.7 157.2L1218.5 149.3L1191.9 142.6L1167.5 137L1147.1 133L1129.2 130.2" stroke="#2d708e"/>
<path d="M419.6 256.5L420.9 252.2L422.5 247.6L424.4 243L426.5 238.4L428.9 233.8L431.8 228.9L438.1 219.6L445.6 210.2L454.2 200.5L464.1 190.6L475.6 180.1" stroke="#2d708e"/>
<path d="M1328.6 179.8L1287.7 167.3L1247.8 155.9L1210.1 146.1L1192.9 141.9L1176.7 138.3" stroke="#2d708e"/>
<path d="M411.6 261.6L412.3 254.1L413.7 246.3L415.9 238.6L418.8 231.1L422.5 223.3L426.9 215.3L432 207.2L438.3 198.5" stroke="#2d708e"/>
<path d="M1365.9 198.2L1338.6 189.5L1311.5 181.4L1283.9 173.7L1258.2 166.9L1234.7 161.2L1212.8 156.4L1193.3 152.7L1175.8 150" stroke="#2d708e"/>
<path d="M467.6 235.6L469.6 228.8L472.1 222.1L475.2 215.1L478.6 208.3L485.7 195.9L499.3 174.6L503.7 167.3" stroke="#2d708e"/>
<path d="M1300.1 167.1L1271.9 160.4L1245.8 154.8L1223 150.6L1202.9 147.6L1186.8 146L1179.7 145.7L1173.2 145.7L1167.3 146L1162 146.5L1157.3 147.4L1152.7 148.7" stroke="#2d708e"/>
<path d="M422.7 257.6L421.9 251.7L421.5 245.8L421.5 239.8L421.8 233.8L422.4 227.6L423.4 221.3L427 204.6" stroke="#2d708e"/>
<path d="M1377.4 204.3L1346.1 195.5L1315.7 187.7L1287.8 181.3L1261.9 176.1L1239.9 172.5L1229.4 171.2L1220.1 170.2L1210.9 169.6L1202.8 169.3L1195.3 169.4L1188.3 169.8" stroke="#2d708e"/>
<path d="M409.8 260.2L411.7 251.9L414.5 243.7L418.2 235.3L422.8 227L428.3 218.5L435 209.8L442.4 201L451.1 191.8" stroke="#2d708e"/>
<path d="M1352.9 191.6L1330.5 184.3L1308.1 177.3L1285.9 170.6L1263.3 164.2" stroke="#2d708e"/>
<path d="M669.7 207.4L677.4 198.8L685.6 190.2L694.2 181.6L703.8 172.5L713.8 163.5L724.7 154.1L736.1 144.6L747.9 135.2L773.8 115.5L802.8 94.6L836.1 71.6L877.9 43.8" stroke="#1e9b8a"/>
<path d="M697.7 202.6L708.5 188.5L720.7 173.9L734.1 159.3L749.3 143.9L759.5 134.2L770.4 124.1L782.3 113.6L794.5 103.1L817.5 83.9L856.7 52.5L865.3 45.3L868.5 42.1L869.1 41.2L869.3 40.5L868.9 40L868 39.7L864.6 39.8" stroke="#1e9b8a"/>
<path d="M660.6 200.3L673.7 190.4L687.4 180.5L701.6 170.7L717.3 160.3L734.7 149.2L752.4 138.4L770.3 127.7L789.5 116.7L807.4 106.8L824.9 97.4L839.7 89.8L852.8 83.6L863.2 79.2L872 76L879.5 73.9L886.6 72.7L891.9 72.4L897 72.8L902.1 73.6L907.1 75.1L912.3 77L918.2 79.8L925.1 83.4L932.1 87.6L941.8 93.8L953.4 101.7L966.1 110.8L978.9 120.3L992.7 130.7L1006.3 141.4L1018.9 151.7L1031.2 162" stroke="#1e9b8a"/>
<path d="M677.7 203.7L675.7 170.3L674.6 162.6L673.2 156.7L672 153.6L670.8 151.1L669.2 148.8L667.4 146.6L665.3 144.7L663 143.2L660.5 141.9L657.6 140.7L654 139.7L649.8 138.9L645.1 138.3L640.5 138.1L629.3 138.2L615.1 139.4L598.7 141.6L580.1 144.8L558.3 149.1L534.6 154.4" stroke="#1e9b8a"/>
<path d="M1270.9 154.7L1273.3 158.7L1276.5 163.4L1287.9 178.8" stroke="#1e9b8a"/>
<path d="M674.3 205L670.4 192L667.6 183.8L664.9 177.2L662 171.6L658.6 166.7L655 162.8L650.8 159.5L645.8 156.8L639.9 154.6L633 153.1L625 152.2L616.2 151.9L606.3 152.2L594.6 153.2L581.7 154.8L567.5 157" stroke="#1e9b8a"/>
<path d="M526.4 318.8L524.5 312.7L522.9 306.7L521.8 300.6L521.1 294.6L520.7 288.5L520.8 282.5L521.2 276.4L522.3 269.6L523.6 263.5L525.3 257.5L527.3 251.5L530.2 244.7L533 238.7L536.3 232.7L539.9 226.8L544.4 220L548.7 214.1L553.4 208.3L558.3 202.4L563.6 196.6L574.9 185.1L588.1 172.9L601.2 161.8L616.8 149.4L629.7 139.8L658.7 118.6L668.8 111L676.1 104.8L678.8 102.1L680.3 100.1" stroke="#2ab07f"/>
<path d="M1123.2 99.8L1100.7 95.8L1090.7 94.5L1083.3 93.7L1077.1 93.5L1072 93.6L1068 94.2L1066.3 94.7L1064.6 95.5L1062.6 97L1062 97.9L1061.4 99.3L1061.1 102L1061.7 105.1L1063.1 109.1L1065.2 113.6L1068.5 119.6L1073.3 127.5" stroke="#2ab07f"/>
<path d="M513.7 310.7L516 304.2L518.8 297.8L522 291.3L526.3 283.9L530.5 277.5L535.2 271L540.2 264.6L546.6 257.2L552.6 250.8L559 244.3L565.8 237.9L574.1 230.5L581.8 224.1L591 216.8L600.6 209.5L610.8 202.2L621.3 194.9L632.3 187.6L656.8 172.2L684.4 156.1L713.2 140.2L748.1 122L784.9 103.7L819 87.7L832.7 81.6L844.3 76.7L853.8 73.1L862.6 70.1L869.6 68.2L875.9 67.1L881.8 66.7L886.4 67L891.6 68.1L896.6 69.9L902.3 72.8L908.1 76.4L914.7 81.2L922.3 87.3L931.8 95.4L942.3 104.8L954.7 116.4L967.1 128.3" stroke="#2ab07f"/>
<path d="M520.6 323.3L517.2 317.4L514.5 312.3L512.2 307.3L510.1 302.2L508.3 297.2L506.8 292.1L505.6 287.1L504.6 281.2L504 276.2L503.7 271.2L503.6 266.2L504 260.4L504.5 255.4L505.5 249.7L506.6 244.8L508.3 239.1L511.8 229.4L516.3 219.8L521.5 210.4L528 200.4L535.1 190.7L543.3 180.6L551.1 171.6L567.1 153.9L572.7 147.2L577.1 141.3L578.7 138.6L579.7 136.5" stroke="#2ab07f"/>
<path d="M1223.7 136.1L1207.1 132.9L1193.5 130.4L1179.7 128.3L1168.7 127L1159 126.2L1150.7 125.9L1143.6 126.3L1137.1 127.3L1132.5 128.8L1129 130.8L1127.6 131.9L1126.1 133.6L1125.1 135L1124.2 137L1123.5 139.1L1123.1 141.3L1122.7 146.3L1123.1 152.3L1124.2 160" stroke="#2ab07f"/>
<path d="M655 266.3L657.6 257L661.1 246.8L664.9 237.5L669.8 227.4L674.8 218.1L681 208L687.7 197.9L695.1 187.8L705 175.4L716.4 162.3L728.6 149.3L742.4 135.6L754.5 124.2L767.7 112.2L783.8 98.2L816.1 70.9L822 65.6L826.1 61.4L828 59.2L829 57.3L829.1 56.1L828.4 55.2L826.9 54.6L824.3 54.4L820.8 54.5L816.1 55" stroke="#4ec36b"/>
<path d="M988.8 55.2L988.5 55.6L988.6 56.4L989.2 57.4L990.2 58.5L993.4 61L998.4 64.6L1009.3 71.6L1046.7 94.7L1067.5 107.9" stroke="#4ec36b"/>
<path d="M645 265.7L652.7 255.5L661.5 244.9L671 234.3L681.3 223.7L692.8 212.7L705 201.7L718.4 190.3L732.4 179L748.7 166.5L766.2 153.6L784.8 140.6L804.2 127.5L823.6 115L841.3 104.2L855.9 95.8L868.8 89.2" stroke="#4ec36b"/>
<path d="M638.3 276.6L624.2 262L597.1 232.8L590.2 225.8L584.2 220.2L576.6 213.9L568.9 208.6L561 204.2L552.8 200.7L547.6 199L542.7 197.7L536.9 196.4L531.3 195.5L524.8 194.7L518.5 194.2L504.9 193.9L489.8 194.5L472.3 196L453.2 198.4L432.5 201.7" stroke="#4ec36b"/>
<path d="M711 235L720.7 224.4L731 213.8L742.6 202.5L754.7 191.4L768 179.7L781.7 168.1L795.7 156.8L810.8 145.1L825.9 133.8L840.2 123.6L853.4 114.6L865.5 107L875.7 101L884.9 96.3L893.1 92.8L901.3 90.2L907.2 88.9L912.4 88.2L917.6 88L923.8 88.2L929.3 89L935.9 90.3L942.7 92.2L950.7 94.9L960.1 98.5L969.8 102.7L980.9 107.9L992.4 113.5L1019.5 127.7L1048.3 143.8" stroke="#81d34d"/>
<path d="M819.9 200.3L823.9 185L828.3 169.6L833.6 153.6L839.5 136.9L846 120.3L853.4 102.4L875.6 52.6L877.6 47.1L878.2 43.9L878.1 42.8L877.8 42.2L877 41.5L876.2 41.2L873 41L868 41.7L861.1 43.2L851 45.7L815.8 55.1" stroke="#375a8c"/>
<path d="M990.9 55.7L1054.1 80.6L1101.1 99.7L1143.4 117.7L1182.1 135" stroke="#375a8c"/>
</g>
<g fill="none" stroke-width="1.39" stroke-linecap="butt">
<path d="M787.5 66.2L820.8 55.8" stroke="#727272"/>
<path d="M827.5 75.8L848.8 61.1L877.5 41.7" stroke="#727272"/>
<path d="M840 83.3L846.8 81.8L849.9 81.3L853 80.9L856 80.6L858.8 80.4L861.5 80.4L864.2 80.5L866.7 80.8" stroke="#727272"/>
<path d="M830.4 96.2L836.6 95.1L842.5 94.2L848.1 93.8L853.3 93.8" stroke="#727272"/>
<path d="M877.5 97.9L875.0 108.8" stroke="#727272"/>
<path d="M865.0 130.4L868.3 140.4" stroke="#727272"/>
<path d="M813.5 133.6L818.0 133.0" stroke="#727272"/>
<path d="M919.2 139.2L921.2 146.2" stroke="#727272"/>
<path d="M687.5 97.5L680.0 105.0" stroke="#727272"/>
<path d="M973.3 57.9L974.5 57.3L976.4 56.9L978.8 56.8L982 56.9L985.8 57.3" stroke="#727272"/>
<path d="M934.2 69.2L942.5 79.2" stroke="#727272"/>
<path d="M939.2 70.7L950.8 72.5" stroke="#727272"/>
<path d="M960.4 70.7L962.7 70.9L967.7 71.6L970.5 72.1L976.2 73.3" stroke="#727272"/>
<path d="M983.3 72.5L976.7 82.5" stroke="#727272"/>
<path d="M1019.2 81.7L1029.2 78.3" stroke="#727272"/>
<path d="M926.7 93.3L931.6 94.5L934.1 95.1L939.2 96.7" stroke="#727272"/>
<path d="M953.3 95.8L952.2 98.4L950.2 103.8L947.5 112.5" stroke="#727272"/>
<path d="M938.3 100.4L933.3 110.4" stroke="#727272"/>
<path d="M959.2 126.2L961.3 134.8L963.3 143.3" stroke="#727272"/>
<path d="M964.6 132.9L963.3 143.3" stroke="#727272"/>
<path d="M952.1 142.9L959.6 153.3" stroke="#727272"/>
<path d="M991.2 136.7L995.8 144.6" stroke="#727272"/>
<path d="M996.7 146.2L997.9 152.5" stroke="#727272"/>
<path d="M1047.0 140.4L1056.2 134.6" stroke="#727272"/>
<path d="M1047.5 117.5L1048.3 120.4" stroke="#727272"/>
<path d="M1073.3 95L1075.2 94.6L1077.4 94.3L1079.9 94.2L1082.7 94.1L1085.8 94.2" stroke="#727272"/>
<path d="M1051.7 100.0L1057.5 104.2" stroke="#727272"/>
<path d="M1105.8 93.8L1116.7 95.8" stroke="#727272"/>
<path d="M1075.0 126.7L1076.2 132.5" stroke="#727272"/>
<path d="M1124.2 143.3L1134.3 150.1L1141.7 155.2L1151.3 162L1158.3 167.1" stroke="#727272"/>
<path d="M1178.8 150L1192.9 157.7L1203.9 163.8L1214.5 169.9L1224.8 176L1237.2 183.7L1246.7 189.8L1255.8 196L1264.6 202.1" stroke="#727272"/>
<path d="M1224.6 154.2L1225.0 162.5" stroke="#727272"/>
<path d="M1229.6 170.0L1236.2 171.7" stroke="#727272"/>
<path d="M515 164L501 167.5" stroke="#727272"/>
<path d="M988.3 54.3L989.1 55.3L990.5 56.4L992.2 57.6L996.7 60.5L1005.3 65.4L1019 72.9" stroke="#bddf26"/>
<path d="M936.7 71.7L940.8 72.7L945.1 74L949.6 75.4L954.2 77.1L959.1 78.9L966.6 82L979.8 87.6L996.6 95.3L1014 103.5L1034.8 113.6L1055.8 124.2" stroke="#bddf26"/>
<path d="M1056 124.3L1073.5 133.1L1090.8 142.1" stroke="#bddf26"/>
<path d="M1074.2 124.2L1089.8 133.1L1105 142.1" stroke="#bddf26"/>
<path d="M1075.4 99.2L1088.2 106.5L1101.1 113.9L1111.3 120L1121.5 126L1131.4 132.2L1141.2 138.3L1150.8 144.5L1157.9 149.2" stroke="#bddf26"/>
<path d="M1157.5 114.2L1160.9 117.3L1167.1 122.4L1174.3 128L1182.1 134" stroke="#bddf26"/>
<path d="M1175.0 150.0L1177.1 152.1" stroke="#bddf26"/>
<path d="M1307.3 184.5L1306.9 186.0" stroke="#bddf26"/>
<path d="M590 187L584.8 186.3L582.2 186L573.8 185.5" stroke="#bddf26"/>
<path d="M573.8 185.5L568.6 185.6L563.2 185.9L557.7 186.2L552 186.7" stroke="#bddf26"/>
<path d="M1021.0 93.3L1012.9 98.9" stroke="#2d708e"/>
<path d="M1045.0 104.2L1040.8 106.9" stroke="#2d708e"/>
<path d="M1094.2 115.8L1086.9 118.8" stroke="#2d708e"/>
<path d="M1129.2 130.2L1120.2 129.4L1114.8 129.1L1109.7 129L1105 129.1" stroke="#2d708e"/>
<path d="M1176.7 138.3L1166.1 136L1156 134" stroke="#2d708e"/>
<path d="M1175.8 150L1167.2 148.8L1159.2 147.9" stroke="#2d708e"/>
<path d="M1152.7 148.7L1146.9 152.1" stroke="#2d708e"/>
<path d="M1188.3 169.8L1180.0 171.0" stroke="#2d708e"/>
<path d="M1263.3 164.2L1247.1 159.6L1233.9 155.9" stroke="#2d708e"/>
<path d="M877.9 43.8L892.1 35" stroke="#1e9b8a"/>
<path d="M942.5 39.8L942.9 40.6L944.3 41.7L946.3 43L951.8 46.2L962.1 51.8" stroke="#1e9b8a"/>
<path d="M1031.2 162.0L1035.8 166.1" stroke="#1e9b8a"/>
<path d="M1287.9 178.8L1292.8 185.4L1297.7 192.4L1300.9 197.2L1304 202.1" stroke="#1e9b8a"/>
<path d="M567.5 157L556.9 158.8L542.9 161.5L528.1 164.6L512.5 168" stroke="#1e9b8a"/>
<path d="M1073.3 127.5L1080.8 139" stroke="#2ab07f"/>
<path d="M967.1 128.3L975.0 136.0" stroke="#2ab07f"/>
<path d="M1124.2 160.0L1125.0 166.1" stroke="#2ab07f"/>
<path d="M1067.5 107.9L1079.5 115.8L1089 122.1" stroke="#4ec36b"/>
<path d="M868.8 89.2L875.0 86.1" stroke="#4ec36b"/>
<path d="M1373.3 201.7L1367.9 205.0" stroke="#4ec36b"/>
<path d="M1048.3 143.8L1065.5 154L1080 162.9" stroke="#81d34d"/>
<path d="M1182.1 135L1195 141.9" stroke="#375a8c"/>
<path d="M862.9 39.6Q866.5 39 868.7 41.6" stroke="#1e9b8a"/>
<path d="M818.3 54.2L824.2 53.6" stroke="#bddf26"/>
</g>
<g fill="#ff6347">
<circle cx="1019.0" cy="72.9" r="1.2"/>
<circle cx="1055.8" cy="124.2" r="1.2"/>
<circle cx="1090.8" cy="142.1" r="1.2"/>
<circle cx="1105.0" cy="142.1" r="1.2"/>
<circle cx="1157.9" cy="149.2" r="1.2"/>
<circle cx="1182.1" cy="134.0" r="1.2"/>
<circle cx="1177.1" cy="152.1" r="1.2"/>
<circle cx="1306.9" cy="186.0" r="1.2"/>
<circle cx="573.8" cy="185.5" r="1.2"/>
<circle cx="552.0" cy="186.7" r="1.2"/>
<circle cx="1012.9" cy="98.9" r="1.2"/>
<circle cx="1040.8" cy="106.9" r="1.2"/>
<circle cx="1086.9" cy="118.8" r="1.2"/>
<circle cx="1105.0" cy="129.1" r="1.2"/>
<circle cx="1156.0" cy="134.0" r="1.2"/>
<circle cx="1159.2" cy="147.9" r="1.2"/>
<circle cx="1146.9" cy="152.1" r="1.2"/>
<circle cx="1180.0" cy="171.0" r="1.2"/>
<circle cx="1233.9" cy="155.9" r="1.2"/>
<circle cx="892.1" cy="35.0" r="1.2"/>
<circle cx="962.1" cy="51.8" r="1.2"/>
<circle cx="1035.8" cy="166.1" r="1.2"/>
<circle cx="1304.0" cy="202.1" r="1.2"/>
<circle cx="512.5" cy="168.0" r="1.2"/>
<circle cx="1080.8" cy="139.0" r="1.2"/>
<circle cx="975.0" cy="136.0" r="1.2"/>
<circle cx="1125.0" cy="166.1" r="1.2"/>
<circle cx="1089.0" cy="122.1" r="1.2"/>
<circle cx="875.0" cy="86.1" r="1.2"/>
<circle cx="1367.9" cy="205.0" r="1.2"/>
<circle cx="1080.0" cy="162.9" r="1.2"/>
<circle cx="1195.0" cy="141.9" r="1.2"/>
</g>
<g fill="none" stroke-width="2.08">
<path d="M469.4 223.1L468.1 223.2L466.7 223.3L465.2 223.4L463.6 223.7L461.9 224L460.2 224.4L458.4 224.8L456.5 225.4L454.6 226L452.6 226.6L450.6 227.3L448.6 228.1L446.5 228.9L444.4 229.8L442.4 230.7L440.3 231.7L438.2 232.7L436.2 233.7L434.1 234.8L432.1 235.9L430.2 237.1L428.2 238.3L426.4 239.5L424.6 240.7L422.8 242L421.2 243.2L419.6 244.5L418.1 245.8L416.6 247.1L415.3 248.4L414 249.6L412.9 250.9L411.8 252.2L410.9 253.4L410.1 254.7L409.3 255.9L408.7 257.1L408.1 258.2L407.7 259.4L407.4 260.5L407.2 261.5L407.1 262.5L407 263.5L407.1 264.5L407.3 265.4L407.6 266.2L407.9 267L408.4 267.8L408.9 268.5L409.6 269.1L410.3 269.7L411 270.3L411.9 270.7L412.8 271.1L413.8 271.5L414.8 271.8L416 272L417.1 272.2L418.3 272.3L419.6 272.3L420.9 272.3L422.2 272.2L423.6 272L425 271.8L426.5 271.5L427.9 271.1L429.4 270.7L431 270.3L432.5 269.7L434 269.1L435.6 268.5L437.2 267.8L438.8 267L440.4 266.2L441.9 265.4L443.5 264.5L445.1 263.5L446.7 262.5L448.3 261.5L449.9 260.5L451.4 259.4L453 258.2L454.5 257.1L456 255.9L457.4 254.7L458.9 253.4L460.3 252.2L461.7 250.9L463.1 249.6L464.4 248.4L465.6 247.1L466.9 245.8L468 244.5L469.2 243.2L470.2 242L471.2 240.7L472.2 239.5L473.1 238.3L473.9 237.1L474.6 235.9L475.2 234.8L475.8 233.7L476.3 232.7L476.7 231.7L477 230.7L477.2 229.8L477.3 228.9L477.4 228.1L477.3 227.3L477.1 226.6L476.8 226L476.4 225.4L475.9 224.8L475.3 224.4L474.6 224L473.8 223.7L472.8 223.4L471.8 223.3L470.7 223.2Z" stroke="#2d708e"/>
<path d="M539.3 289.9L538 290L536.7 290.1L535.4 290.2L534.1 290.5L532.7 290.8L531.4 291.1L530 291.6L528.7 292.1L527.4 292.6L526.1 293.2L524.8 293.9L523.5 294.6L522.3 295.4L521.1 296.3L519.9 297.2L518.8 298.1L517.8 299.1L516.8 300.1L515.8 301.2L514.9 302.3L514.1 303.4L513.3 304.6L512.7 305.8L512 307L511.5 308.2L511.1 309.5L510.7 310.7L510.4 312L510.2 313.3L510.1 314.6L510 315.8L510.1 317.1L510.2 318.4L510.4 319.6L510.7 320.9L511.1 322.1L511.6 323.3L512.1 324.5L512.7 325.7L513.4 326.8L514.2 327.9L515 329L515.9 330L516.8 331L517.8 331.9L518.8 332.8L519.9 333.6L521.1 334.4L522.2 335.1L523.4 335.8L524.7 336.4L525.9 337L527.2 337.4L528.5 337.9L529.8 338.2L531.1 338.5L532.4 338.8L533.7 338.9L535 339L536.3 339.1L537.5 339L538.8 338.9L540 338.8L541.2 338.5L542.4 338.2L543.6 337.9L544.7 337.4L545.8 337L546.9 336.4L547.9 335.8L548.9 335.1L549.8 334.4L550.7 333.6L551.6 332.8L552.4 331.9L553.2 331L553.9 330L554.6 329L555.3 327.9L555.9 326.8L556.4 325.7L556.9 324.5L557.4 323.3L557.8 322.1L558.1 320.9L558.4 319.6L558.7 318.4L558.9 317.1L559 315.8L559.1 314.6L559.2 313.3L559.2 312L559.1 310.7L559 309.5L558.9 308.2L558.7 307L558.4 305.8L558.1 304.6L557.8 303.4L557.4 302.3L556.9 301.2L556.4 300.1L555.9 299.1L555.2 298.1L554.6 297.2L553.9 296.3L553.1 295.4L552.3 294.6L551.4 293.9L550.5 293.2L549.6 292.6L548.6 292.1L547.6 291.6L546.5 291.1L545.4 290.8L544.2 290.5L543 290.2L541.8 290.1L540.6 290Z" stroke="#2ab07f"/>
<path d="M696.3 181.8L695 181.9L693.6 182L692.1 182.2L690.6 182.4L689 182.7L687.4 183.1L685.7 183.6L684 184.2L682.2 184.8L680.4 185.4L678.6 186.2L676.7 187L674.9 187.8L673 188.7L671.2 189.7L669.3 190.6L667.5 191.7L665.7 192.8L663.9 193.9L662.1 195L660.4 196.2L658.8 197.4L657.2 198.6L655.6 199.9L654.1 201.1L652.7 202.4L651.3 203.7L650 205L648.8 206.3L647.7 207.5L646.6 208.8L645.7 210.1L644.8 211.3L644 212.6L643.3 213.8L642.7 215L642.2 216.1L641.8 217.3L641.5 218.4L641.3 219.5L641.1 220.5L641.1 221.5L641.2 222.5L641.3 223.4L641.6 224.3L641.9 225.1L642.3 225.9L642.8 226.6L643.3 227.3L644 227.9L644.7 228.5L645.5 229L646.4 229.5L647.3 229.9L648.3 230.2L649.4 230.5L650.5 230.7L651.6 230.9L652.8 231L654.1 231L655.4 231L656.7 230.9L658.1 230.7L659.5 230.5L661 230.2L662.4 229.9L663.9 229.5L665.4 229L666.9 228.5L668.5 227.9L670 227.3L671.6 226.6L673.1 225.9L674.7 225.1L676.2 224.3L677.7 223.4L679.3 222.5L680.8 221.5L682.3 220.5L683.8 219.5L685.2 218.4L686.6 217.3L688 216.1L689.4 215L690.8 213.8L692 212.6L693.3 211.3L694.5 210.1L695.7 208.8L696.8 207.5L697.9 206.3L698.9 205L699.8 203.7L700.7 202.4L701.5 201.1L702.3 199.9L703 198.6L703.6 197.4L704.2 196.2L704.7 195L705.1 193.9L705.4 192.8L705.6 191.7L705.8 190.6L705.8 189.7L705.8 188.7L705.7 187.8L705.5 187L705.3 186.2L704.9 185.4L704.4 184.8L703.9 184.2L703.2 183.6L702.5 183.1L701.7 182.7L700.8 182.4L699.8 182.2L698.7 182L697.5 181.9Z" stroke="#1e9b8a"/>
<path d="M729.1 213.3L727.8 213.4L726.5 213.5L725.1 213.6L723.7 213.9L722.2 214.2L720.8 214.6L719.3 215.1L717.8 215.6L716.3 216.2L714.8 216.8L713.3 217.5L711.8 218.3L710.3 219.1L708.8 220L707.4 220.9L705.9 221.9L704.5 222.9L703.1 224L701.8 225.1L700.5 226.2L699.3 227.4L698.1 228.6L697 229.8L695.9 231L694.9 232.3L694 233.5L693.1 234.8L692.3 236.1L691.6 237.4L691 238.7L690.4 239.9L690 241.2L689.6 242.5L689.2 243.7L689 244.9L688.8 246.2L688.8 247.3L688.8 248.5L688.9 249.6L689 250.7L689.3 251.8L689.6 252.8L690 253.8L690.5 254.7L691 255.6L691.7 256.5L692.3 257.3L693.1 258L693.9 258.7L694.8 259.4L695.7 259.9L696.7 260.5L697.7 260.9L698.7 261.3L699.9 261.7L701 262L702.2 262.2L703.4 262.4L704.6 262.5L705.9 262.5L707.2 262.5L708.5 262.4L709.8 262.2L711.2 262L712.5 261.7L713.9 261.3L715.2 260.9L716.6 260.5L717.9 259.9L719.2 259.4L720.6 258.7L721.9 258L723.2 257.3L724.4 256.5L725.7 255.6L726.9 254.7L728.1 253.8L729.3 252.8L730.4 251.8L731.5 250.7L732.6 249.6L733.6 248.5L734.6 247.3L735.5 246.2L736.4 244.9L737.2 243.7L738 242.5L738.8 241.2L739.5 239.9L740.1 238.7L740.7 237.4L741.2 236.1L741.6 234.8L742 233.5L742.3 232.3L742.6 231L742.8 229.8L743 228.6L743 227.4L743 226.2L743 225.1L742.8 224L742.6 222.9L742.3 221.9L742 220.9L741.6 220L741.1 219.1L740.6 218.3L740 217.5L739.3 216.8L738.5 216.2L737.7 215.6L736.8 215.1L735.9 214.6L734.9 214.2L733.9 213.9L732.7 213.6L731.6 213.5L730.4 213.4Z" stroke="#81d34d"/>
<path d="M661.8 241.8L660.5 241.9L659.1 242L657.8 242.1L656.4 242.4L654.9 242.7L653.5 243.1L652 243.5L650.6 244L649.1 244.6L647.6 245.3L646.1 246L644.6 246.7L643.2 247.5L641.7 248.4L640.3 249.3L638.9 250.3L637.6 251.3L636.3 252.3L635 253.4L633.8 254.5L632.6 255.7L631.5 256.8L630.4 258L629.4 259.3L628.5 260.5L627.6 261.8L626.9 263L626.2 264.3L625.5 265.6L625 266.9L624.5 268.2L624.1 269.4L623.8 270.7L623.6 272L623.4 273.2L623.4 274.4L623.4 275.6L623.5 276.8L623.7 277.9L624 279L624.3 280.1L624.7 281.1L625.2 282.1L625.8 283.1L626.4 284L627.1 284.9L627.9 285.7L628.7 286.4L629.6 287.1L630.5 287.8L631.5 288.4L632.5 288.9L633.6 289.4L634.7 289.8L635.9 290.2L637 290.5L638.2 290.7L639.5 290.9L640.7 291L642 291L643.3 291L644.6 290.9L645.9 290.7L647.2 290.5L648.5 290.2L649.8 289.8L651.1 289.4L652.4 288.9L653.7 288.4L655 287.8L656.2 287.1L657.5 286.4L658.7 285.7L659.9 284.9L661.1 284L662.2 283.1L663.3 282.1L664.4 281.1L665.4 280.1L666.4 279L667.4 277.9L668.3 276.8L669.2 275.6L670 274.4L670.8 273.2L671.6 272L672.3 270.7L672.9 269.4L673.5 268.2L674 266.9L674.5 265.6L675 264.3L675.3 263L675.6 261.8L675.9 260.5L676.1 259.3L676.2 258L676.3 256.8L676.3 255.7L676.2 254.5L676.1 253.4L675.9 252.3L675.7 251.3L675.4 250.3L675 249.3L674.5 248.4L674 247.5L673.4 246.7L672.8 246L672.1 245.3L671.3 244.6L670.5 244L669.6 243.5L668.6 243.1L667.6 242.7L666.5 242.4L665.4 242.1L664.2 242L663 241.9Z" stroke="#4ec36b"/>
<path d="M701 287.2L699.7 287.3L698.4 287.4L697.1 287.5L695.8 287.8L694.5 288.1L693.2 288.4L691.9 288.9L690.7 289.4L689.4 289.9L688.2 290.5L686.9 291.2L685.8 292L684.6 292.7L683.5 293.6L682.4 294.5L681.4 295.4L680.4 296.4L679.5 297.4L678.6 298.5L677.8 299.6L677.1 300.7L676.4 301.9L675.8 303.1L675.2 304.3L674.7 305.5L674.3 306.8L674 308L673.7 309.3L673.6 310.6L673.5 311.9L673.4 313.2L673.5 314.4L673.6 315.7L673.8 317L674.1 318.2L674.5 319.4L674.9 320.7L675.4 321.8L676 323L676.6 324.1L677.3 325.2L678.1 326.3L678.9 327.3L679.8 328.3L680.7 329.2L681.7 330.1L682.7 330.9L683.8 331.7L684.9 332.4L686 333.1L687.2 333.7L688.4 334.3L689.6 334.8L690.9 335.2L692.1 335.5L693.4 335.8L694.7 336.1L696 336.2L697.2 336.3L698.5 336.4L699.8 336.3L701.1 336.2L702.3 336.1L703.6 335.8L704.8 335.5L706 335.2L707.2 334.8L708.3 334.3L709.4 333.7L710.5 333.1L711.5 332.4L712.5 331.7L713.5 330.9L714.4 330.1L715.3 329.2L716.2 328.3L717 327.3L717.7 326.3L718.4 325.2L719.1 324.1L719.6 323L720.2 321.8L720.7 320.7L721.1 319.4L721.5 318.2L721.8 317L722.1 315.7L722.3 314.4L722.4 313.2L722.5 311.9L722.6 310.6L722.5 309.3L722.5 308L722.3 306.8L722.1 305.5L721.9 304.3L721.6 303.1L721.2 301.9L720.8 300.7L720.3 299.6L719.7 298.5L719.2 297.4L718.5 296.4L717.8 295.4L717.1 294.5L716.3 293.6L715.4 292.7L714.5 292L713.6 291.2L712.6 290.5L711.6 289.9L710.6 289.4L709.5 288.9L708.3 288.4L707.2 288.1L706 287.8L704.8 287.5L703.5 287.4L702.3 287.3Z" stroke="#bddf26"/>
<path d="M848.7 174.2L847.4 174.3L846.1 174.4L844.7 174.6L843.4 174.8L842.1 175.2L840.7 175.6L839.4 176L838 176.6L836.7 177.2L835.4 177.9L834.1 178.6L832.8 179.4L831.5 180.3L830.3 181.2L829.1 182.1L827.9 183.1L826.8 184.2L825.7 185.2L824.7 186.4L823.7 187.5L822.8 188.7L821.9 189.9L821.1 191.1L820.4 192.4L819.7 193.6L819 194.9L818.5 196.2L818 197.5L817.6 198.8L817.2 200L817 201.3L816.8 202.6L816.6 203.8L816.6 205.1L816.6 206.3L816.7 207.5L816.8 208.6L817.1 209.8L817.4 210.9L817.8 211.9L818.2 213L818.7 214L819.3 214.9L819.9 215.9L820.6 216.7L821.4 217.6L822.2 218.3L823.1 219.1L824 219.7L825 220.4L826 220.9L827 221.4L828.1 221.9L829.2 222.3L830.4 222.6L831.6 222.9L832.8 223.1L834.1 223.3L835.3 223.4L836.6 223.4L837.9 223.4L839.2 223.3L840.5 223.1L841.8 222.9L843.1 222.6L844.4 222.3L845.7 221.9L846.9 221.4L848.2 220.9L849.4 220.4L850.7 219.7L851.9 219.1L853 218.3L854.2 217.6L855.3 216.7L856.4 215.9L857.4 214.9L858.4 214L859.4 213L860.3 211.9L861.1 210.9L861.9 209.8L862.7 208.6L863.4 207.5L864 206.3L864.6 205.1L865.1 203.8L865.6 202.6L866 201.3L866.4 200L866.6 198.8L866.9 197.5L867 196.2L867.1 194.9L867.1 193.6L867.1 192.4L867 191.1L866.8 189.9L866.6 188.7L866.3 187.5L865.9 186.4L865.5 185.2L865 184.2L864.4 183.1L863.8 182.1L863.1 181.2L862.4 180.3L861.6 179.4L860.8 178.6L859.9 177.9L858.9 177.2L857.9 176.6L856.9 176L855.8 175.6L854.7 175.2L853.6 174.8L852.4 174.6L851.2 174.4L849.9 174.3Z" stroke="#375a8c"/>
</g>
<path d="M688.3 313.6 h6.6 M691.6 310.3 v6.6 M703.6 315.0 h6.6 M706.9 311.7 v6.6 M705.8 314.5 h6.6 M709.1 311.2 v6.6 M679.4 314.5 h6.6 M682.7 311.2 v6.6 M694.2 312.5 h6.6 M697.5 309.2 v6.6 M697.1 311.4 h6.6 M700.4 308.1 v6.6 M671.5 311.6 h6.6 M674.8 308.3 v6.6 M681.2 320.4 h6.6 M684.5 317.1 v6.6 M713.0 298.4 h6.6 M716.3 295.1 v6.6 M715.2 296.2 h6.6 M718.5 292.9 v6.6 M408.5 255.5 h6.6 M411.8 252.2 v6.6 M433.1 249.7 h6.6 M436.4 246.4 v6.6 M470.8 235.6 h6.6 M474.1 232.3 v6.6 M407.3 258.6 h6.6 M410.6 255.3 v6.6 M416.3 256.5 h6.6 M419.6 253.2 v6.6 M408.3 261.6 h6.6 M411.6 258.3 v6.6 M464.3 235.6 h6.6 M467.6 232.3 v6.6 M419.4 257.6 h6.6 M422.7 254.3 v6.6 M406.5 260.2 h6.6 M409.8 256.9 v6.6 M666.4 207.4 h6.6 M669.7 204.1 v6.6 M694.4 202.6 h6.6 M697.7 199.3 v6.6 M657.3 200.3 h6.6 M660.6 197.0 v6.6 M674.4 203.7 h6.6 M677.7 200.4 v6.6 M671.0 205.0 h6.6 M674.3 201.7 v6.6 M523.1 318.8 h6.6 M526.4 315.5 v6.6 M510.4 310.7 h6.6 M513.7 307.4 v6.6 M517.3 323.3 h6.6 M520.6 320.0 v6.6 M651.7 266.3 h6.6 M655.0 263.0 v6.6 M641.7 265.7 h6.6 M645.0 262.4 v6.6 M635.0 276.6 h6.6 M638.3 273.3 v6.6 M707.7 235.0 h6.6 M711.0 231.7 v6.6 M816.6 200.3 h6.6 M819.9 197.0 v6.6" stroke="#ff0000" stroke-width="1.05" fill="none"/>
<g font-family="'DejaVu Sans','Liberation Sans',sans-serif" font-size="10.4" fill="#fff" text-anchor="middle">
<text x="438.8" y="251.1">LEO</text>
<text x="534.3" y="317.9">AMO</text>
<text x="672.9" y="209.8">THA</text>
<text x="715.6" y="241.3">NTA</text>
<text x="648.5" y="269.8">NOO</text>
<text x="697.7" y="315.2">OER</text>
<text x="841.8" y="202.2">AND</text>
</g>
<g font-family="'DejaVu Sans Mono','Liberation Mono',monospace" font-size="13.89" fill="#fff" xml:space="preserve">
<text x="316.2" y="29.60">UK003T</text>
<text x="316.2" y="42.69">Beg: 20251116 17:35:39 (sol = 234.26&#176;)</text>
<text x="316.2" y="55.78">End: 20251117 06:15:55 (sol = 234.79&#176;)</text>
<text x="316.2" y="68.87">--------------------------------------</text>
<text x="316.2" y="81.96">...: 37</text>
<text x="316.2" y="95.05">OER: 10</text>
<text x="316.2" y="108.14">LEO: 9</text>
<text x="316.2" y="121.23">THA: 5</text>
<text x="316.2" y="134.32">AMO: 3</text>
<text x="316.2" y="147.41">NOO: 3</text>
<text x="316.2" y="160.50">AND: 1</text>
<text x="316.2" y="173.59">NTA: 1</text>
</g>
<g stroke="#777777" stroke-width="2.08" stroke-dasharray="2.08 3.44" fill="none">
<path d="M75.0 842.5 V641.5"/>
<path d="M219.1 842.5 V641.5"/>
<path d="M365.0 842.5 V641.5"/>
<path d="M506.0 842.5 V641.5"/>
<path d="M651.0 842.5 V641.5"/>
<path d="M797.0 842.5 V641.5"/>
<path d="M940.0 842.5 V641.5"/>
<path d="M1091.0 842.5 V641.5"/>
<path d="M1239.3 842.5 V641.5"/>
<path d="M1394.0 842.5 V641.5"/>
<path d="M1548.3 842.5 V641.5"/>
<path d="M1687.3 842.5 V641.5"/>
</g>
<g font-family="'DejaVu Sans','Liberation Sans',sans-serif" font-size="27.78" fill="#555" text-anchor="end">
<text transform="translate(149.0 642.5) rotate(-90)">APR</text>
<text transform="translate(295.0 644.5) rotate(-90)">MAY</text>
<text transform="translate(435.7 640.5) rotate(-90)">JUN</text>
<text transform="translate(576.7 640.5) rotate(-90)">JUL</text>
<text transform="translate(724.0 642.5) rotate(-90)">AUG</text>
<text transform="translate(871.7 643.5) rotate(-90)">SEP</text>
<text transform="translate(1016.7 643.5) rotate(-90)">OCT</text>
<text transform="translate(1170.0 644.5) rotate(-90)">NOV</text>
<text transform="translate(1319.3 644.5) rotate(-90)">DEC</text>
<text transform="translate(1469.3 641.5) rotate(-90)">JAN</text>
<text transform="translate(1627.7 644.5) rotate(-90)">FEB</text>
<text transform="translate(1766.7 644.5) rotate(-90)">MAR</text>
</g>
<rect x="106.0" y="831.92" width="24.0" height="4.17" fill="#bddf26"/>
<rect x="165.0" y="831.92" width="180.0" height="4.17" fill="#bddf26"/>
<rect x="366.0" y="831.92" width="259.0" height="4.17" fill="#bddf26"/>
<rect x="636.0" y="831.92" width="151.0" height="4.17" fill="#bddf26"/>
<rect x="807.0" y="831.92" width="93.0" height="4.17" fill="#bddf26"/>
<rect x="920.0" y="831.92" width="53.0" height="4.17" fill="#bddf26"/>
<rect x="984.0" y="831.92" width="82.0" height="4.17" fill="#bddf26"/>
<rect x="1082.0" y="831.92" width="122.0" height="4.17" fill="#bddf26"/>
<rect x="1244.0" y="831.92" width="82.0" height="4.17" fill="#bddf26"/>
<rect x="1337.0" y="831.92" width="19.0" height="4.17" fill="#bddf26"/>
<rect x="1381.0" y="831.92" width="63.0" height="4.17" fill="#bddf26"/>
<rect x="1459.0" y="831.92" width="53.0" height="4.17" fill="#bddf26"/>
<rect x="1523.0" y="831.92" width="24.0" height="4.17" fill="#bddf26"/>
<rect x="1724.0" y="831.92" width="24.0" height="4.17" fill="#bddf26"/>
<rect x="1758.0" y="831.92" width="24.0" height="4.17" fill="#bddf26"/>
<rect x="165.0" y="815.59" width="24.0" height="4.17" fill="#81d34d"/>
<rect x="224.0" y="815.59" width="63.0" height="4.17" fill="#81d34d"/>
<rect x="312.0" y="815.59" width="29.0" height="4.17" fill="#81d34d"/>
<rect x="366.0" y="815.59" width="127.0" height="4.17" fill="#81d34d"/>
<rect x="508.0" y="815.59" width="146.0" height="4.17" fill="#81d34d"/>
<rect x="704.0" y="815.59" width="34.0" height="4.17" fill="#81d34d"/>
<rect x="773.0" y="815.59" width="73.0" height="4.17" fill="#81d34d"/>
<rect x="871.0" y="815.59" width="117.0" height="4.17" fill="#81d34d"/>
<rect x="1003.0" y="815.59" width="14.0" height="4.17" fill="#81d34d"/>
<rect x="1062.0" y="815.59" width="151.0" height="4.17" fill="#81d34d"/>
<rect x="1244.0" y="815.59" width="23.0" height="4.17" fill="#81d34d"/>
<rect x="1293.0" y="815.59" width="23.0" height="4.17" fill="#81d34d"/>
<rect x="1342.0" y="815.59" width="23.0" height="4.17" fill="#81d34d"/>
<rect x="1386.0" y="815.59" width="43.0" height="4.17" fill="#81d34d"/>
<rect x="1459.0" y="815.59" width="24.0" height="4.17" fill="#81d34d"/>
<rect x="1548.0" y="815.59" width="23.0" height="4.17" fill="#81d34d"/>
<rect x="165.0" y="799.26" width="24.0" height="4.17" fill="#4ec36b"/>
<rect x="258.0" y="799.26" width="230.0" height="4.17" fill="#4ec36b"/>
<rect x="508.0" y="799.26" width="107.0" height="4.17" fill="#4ec36b"/>
<rect x="626.0" y="799.26" width="92.0" height="4.17" fill="#4ec36b"/>
<rect x="729.0" y="799.26" width="97.0" height="4.17" fill="#4ec36b"/>
<rect x="949.0" y="799.26" width="201.0" height="4.17" fill="#4ec36b"/>
<rect x="1160.0" y="799.26" width="88.0" height="4.17" fill="#4ec36b"/>
<rect x="1258.0" y="799.26" width="186.0" height="4.17" fill="#4ec36b"/>
<rect x="1459.0" y="799.26" width="24.0" height="4.17" fill="#4ec36b"/>
<rect x="1553.0" y="799.26" width="23.0" height="4.17" fill="#4ec36b"/>
<rect x="194.0" y="782.93" width="24.0" height="4.17" fill="#2ab07f"/>
<rect x="322.0" y="782.93" width="185.0" height="4.17" fill="#2ab07f"/>
<rect x="518.0" y="782.93" width="24.0" height="4.17" fill="#2ab07f"/>
<rect x="557.0" y="782.93" width="127.0" height="4.17" fill="#2ab07f"/>
<rect x="807.0" y="782.93" width="24.0" height="4.17" fill="#2ab07f"/>
<rect x="954.0" y="782.93" width="19.0" height="4.17" fill="#2ab07f"/>
<rect x="989.0" y="782.93" width="136.0" height="4.17" fill="#2ab07f"/>
<rect x="1155.0" y="782.93" width="63.0" height="4.17" fill="#2ab07f"/>
<rect x="1244.0" y="782.93" width="23.0" height="4.17" fill="#2ab07f"/>
<rect x="1317.0" y="782.93" width="24.0" height="4.17" fill="#2ab07f"/>
<rect x="1396.0" y="782.93" width="23.0" height="4.17" fill="#2ab07f"/>
<rect x="1464.0" y="782.93" width="186.0" height="4.17" fill="#2ab07f"/>
<rect x="341.0" y="766.60" width="29.0" height="4.17" fill="#1e9b8a"/>
<rect x="410.0" y="766.60" width="38.0" height="4.17" fill="#1e9b8a"/>
<rect x="469.0" y="766.60" width="24.0" height="4.17" fill="#1e9b8a"/>
<rect x="528.0" y="766.60" width="18.0" height="4.17" fill="#1e9b8a"/>
<rect x="562.0" y="766.60" width="29.0" height="4.17" fill="#1e9b8a"/>
<rect x="616.0" y="766.60" width="33.0" height="4.17" fill="#1e9b8a"/>
<rect x="959.0" y="766.60" width="29.0" height="4.17" fill="#1e9b8a"/>
<rect x="1062.0" y="766.60" width="24.0" height="4.17" fill="#1e9b8a"/>
<rect x="1101.0" y="766.60" width="24.0" height="4.17" fill="#1e9b8a"/>
<rect x="1160.0" y="766.60" width="34.0" height="4.17" fill="#1e9b8a"/>
<rect x="1249.0" y="766.60" width="23.0" height="4.17" fill="#1e9b8a"/>
<rect x="1425.0" y="766.60" width="87.0" height="4.17" fill="#1e9b8a"/>
<rect x="420.0" y="750.27" width="24.0" height="4.17" fill="#25858e"/>
<rect x="533.0" y="750.27" width="23.0" height="4.17" fill="#25858e"/>
<rect x="567.0" y="750.27" width="24.0" height="4.17" fill="#25858e"/>
<rect x="621.0" y="750.27" width="122.0" height="4.17" fill="#25858e"/>
<rect x="969.0" y="750.27" width="166.0" height="4.17" fill="#25858e"/>
<rect x="1185.0" y="750.27" width="161.0" height="4.17" fill="#25858e"/>
<rect x="1469.0" y="750.27" width="24.0" height="4.17" fill="#25858e"/>
<rect x="430.0" y="733.94" width="23.0" height="4.17" fill="#2d708e"/>
<rect x="577.0" y="733.94" width="156.0" height="4.17" fill="#2d708e"/>
<rect x="994.0" y="733.94" width="111.0" height="4.17" fill="#2d708e"/>
<rect x="1116.0" y="733.94" width="107.0" height="4.17" fill="#2d708e"/>
<rect x="1263.0" y="733.94" width="29.0" height="4.17" fill="#2d708e"/>
<rect x="1489.0" y="733.94" width="23.0" height="4.17" fill="#2d708e"/>
<rect x="592.0" y="717.61" width="23.0" height="4.17" fill="#375a8c"/>
<rect x="655.0" y="717.61" width="117.0" height="4.17" fill="#375a8c"/>
<rect x="1072.0" y="717.61" width="171.0" height="4.17" fill="#375a8c"/>
<rect x="1263.0" y="717.61" width="24.0" height="4.17" fill="#375a8c"/>
<rect x="596.0" y="701.28" width="137.0" height="4.17" fill="#424086"/>
<rect x="1092.0" y="701.28" width="28.0" height="4.17" fill="#424086"/>
<rect x="1200.0" y="701.28" width="23.0" height="4.17" fill="#424086"/>
<rect x="1273.0" y="701.28" width="53.0" height="4.17" fill="#424086"/>
<rect x="1111.0" y="684.95" width="24.0" height="4.17" fill="#482475"/>
<path d="M113.8 834.00 h8.3 M118.0 829.85 v8.3 M240.8 834.00 h8.3 M245.0 829.85 v8.3 M510.9 834.00 h8.3 M515.0 829.85 v8.3 M706.5 834.00 h8.3 M710.6 829.85 v8.3 M833.9 834.00 h8.3 M838.0 829.85 v8.3 M961.9 834.00 h8.3 M966.0 829.85 v8.3 M986.9 834.00 h8.3 M991.0 829.85 v8.3 M1116.8 834.00 h8.3 M1121.0 829.85 v8.3 M1295.8 834.00 h8.3 M1300.0 829.85 v8.3 M1341.8 834.00 h8.3 M1346.0 829.85 v8.3 M1412.8 834.00 h8.3 M1417.0 829.85 v8.3 M1481.4 834.00 h8.3 M1485.6 829.85 v8.3 M1530.8 834.00 h8.3 M1535.0 829.85 v8.3 M1731.8 834.00 h8.3 M1736.0 829.85 v8.3 M1765.8 834.00 h8.3 M1770.0 829.85 v8.3 M172.7 817.67 h8.3 M176.8 813.52 v8.3 M255.8 817.67 h8.3 M260.0 813.52 v8.3 M323.9 817.67 h8.3 M328.0 813.52 v8.3 M437.9 817.67 h8.3 M442.0 813.52 v8.3 M598.9 817.67 h8.3 M603.0 813.52 v8.3 M716.9 817.67 h8.3 M721.0 813.52 v8.3 M793.9 817.67 h8.3 M798.0 813.52 v8.3 M939.9 817.67 h8.3 M944.0 813.52 v8.3 M1005.9 817.67 h8.3 M1010.0 813.52 v8.3 M1152.8 817.67 h8.3 M1157.0 813.52 v8.3 M1250.8 817.67 h8.3 M1255.0 813.52 v8.3 M1299.8 817.67 h8.3 M1304.0 813.52 v8.3 M1349.4 817.67 h8.3 M1353.6 813.52 v8.3 M1402.8 817.67 h8.3 M1407.0 813.52 v8.3 M1466.8 817.67 h8.3 M1471.0 813.52 v8.3 M1554.8 817.67 h8.3 M1559.0 813.52 v8.3 M174.8 801.34 h8.3 M179.0 797.19 v8.3 M378.9 801.34 h8.3 M383.0 797.19 v8.3 M544.9 801.34 h8.3 M549.0 797.19 v8.3 M682.9 801.34 h8.3 M687.0 797.19 v8.3 M741.9 801.34 h8.3 M746.0 797.19 v8.3 M1074.8 801.34 h8.3 M1079.0 797.19 v8.3 M1216.8 801.34 h8.3 M1221.0 797.19 v8.3 M1304.8 801.34 h8.3 M1309.0 797.19 v8.3 M1466.8 801.34 h8.3 M1471.0 797.19 v8.3 M1559.8 801.34 h8.3 M1564.0 797.19 v8.3 M201.8 785.01 h8.3 M206.0 780.86 v8.3 M400.5 785.01 h8.3 M404.6 780.86 v8.3 M525.9 785.01 h8.3 M530.0 780.86 v8.3 M638.9 785.01 h8.3 M643.0 780.86 v8.3 M814.9 785.01 h8.3 M819.0 780.86 v8.3 M959.9 785.01 h8.3 M964.0 780.86 v8.3 M1040.8 785.01 h8.3 M1045.0 780.86 v8.3 M1187.8 785.01 h8.3 M1192.0 780.86 v8.3 M1250.8 785.01 h8.3 M1255.0 780.86 v8.3 M1324.8 785.01 h8.3 M1329.0 780.86 v8.3 M1402.8 785.01 h8.3 M1407.0 780.86 v8.3 M1545.4 785.01 h8.3 M1549.6 780.86 v8.3 M355.9 768.68 h8.3 M360.0 764.53 v8.3 M426.9 768.68 h8.3 M431.0 764.53 v8.3 M476.9 768.68 h8.3 M481.0 764.53 v8.3 M535.9 768.68 h8.3 M540.0 764.53 v8.3 M570.9 768.68 h8.3 M575.0 764.53 v8.3 M630.9 768.68 h8.3 M635.0 764.53 v8.3 M973.9 768.68 h8.3 M978.0 764.53 v8.3 M1069.8 768.68 h8.3 M1074.0 764.53 v8.3 M1108.8 768.68 h8.3 M1113.0 764.53 v8.3 M1177.8 768.68 h8.3 M1182.0 764.53 v8.3 M1255.8 768.68 h8.3 M1260.0 764.53 v8.3 M1466.8 768.68 h8.3 M1471.0 764.53 v8.3 M427.9 752.35 h8.3 M432.0 748.20 v8.3 M539.9 752.35 h8.3 M544.0 748.20 v8.3 M574.9 752.35 h8.3 M579.0 748.20 v8.3 M703.9 752.35 h8.3 M708.0 748.20 v8.3 M1094.8 752.35 h8.3 M1099.0 748.20 v8.3 M1270.8 752.35 h8.3 M1275.0 748.20 v8.3 M1476.8 752.35 h8.3 M1481.0 748.20 v8.3 M437.9 736.02 h8.3 M442.0 731.87 v8.3 M630.9 736.02 h8.3 M635.0 731.87 v8.3 M1038.8 736.02 h8.3 M1043.0 731.87 v8.3 M1167.8 736.02 h8.3 M1172.0 731.87 v8.3 M1274.8 736.02 h8.3 M1279.0 731.87 v8.3 M1496.8 736.02 h8.3 M1501.0 731.87 v8.3 M598.9 719.69 h8.3 M603.0 715.54 v8.3 M726.9 719.69 h8.3 M731.0 715.54 v8.3 M1187.8 719.69 h8.3 M1192.0 715.54 v8.3 M1270.8 719.69 h8.3 M1275.0 715.54 v8.3 M687.9 703.36 h8.3 M692.0 699.21 v8.3 M1101.8 703.36 h8.3 M1106.0 699.21 v8.3 M1206.8 703.36 h8.3 M1211.0 699.21 v8.3 M1299.8 703.36 h8.3 M1304.0 699.21 v8.3 M1118.8 687.03 h8.3 M1123.0 682.88 v8.3" stroke="#fff" stroke-width="2.08" fill="none"/>
<g font-family="'DejaVu Sans','Liberation Sans',sans-serif" font-size="10.6" fill="#fff" text-anchor="middle">
<text x="117.7" y="832.10">KSE</text>
<text x="254.7" y="832.10">ETA</text>
<text x="495.2" y="832.10">NZC</text>
<text x="710.8" y="832.10">NDA</text>
<text x="854.2" y="832.10">SPE</text>
<text x="946.8" y="832.10">ARD</text>
<text x="1024.7" y="832.10">EGE</text>
<text x="1142.7" y="832.10">NTA</text>
<text x="1284.7" y="832.10">MON</text>
<text x="1343.5" y="832.10">URS</text>
<text x="1412.2" y="832.10">AHY</text>
<text x="1485.9" y="832.10">GUM</text>
<text x="1535.4" y="832.10">OHY</text>
<text x="1736.2" y="832.10">XHE</text>
<text x="1769.7" y="832.10">EVI</text>
<text x="176.7" y="814.97">AVB</text>
<text x="255.2" y="814.97">ELY</text>
<text x="323.9" y="814.97">CAM</text>
<text x="432.2" y="814.97">SSG</text>
<text x="578.7" y="814.97">PCA</text>
<text x="720.7" y="814.97">AUD</text>
<text x="809.2" y="814.97">AUR</text>
<text x="931.2" y="814.97">DSX</text>
<text x="1010.9" y="814.97">OCU</text>
<text x="1138.2" y="814.97">OER</text>
<text x="1254.3" y="814.97">DKD</text>
<text x="1304.2" y="814.97">DSV</text>
<text x="1353.2" y="814.97">ALY</text>
<text x="1407.9" y="814.97">JLE</text>
<text x="1471.9" y="814.97">SCC</text>
<text x="1559.2" y="814.97">FEV</text>
<text x="176.7" y="798.64">LYR</text>
<text x="372.7" y="798.64">JMC</text>
<text x="559.2" y="798.64">JPE</text>
<text x="671.7" y="798.64">PAU</text>
<text x="774.2" y="798.64">NIA</text>
<text x="1049.8" y="798.64">STA</text>
<text x="1206.4" y="798.64">NOO</text>
<text x="1353.4" y="798.64">COM</text>
<text x="1470.7" y="798.64">NCC</text>
<text x="1564.7" y="798.64">FED</text>
<text x="205.7" y="783.11">HVI</text>
<text x="412.0" y="783.11">ARI</text>
<text x="529.9" y="783.11">SZC</text>
<text x="618.6" y="783.11">CAP</text>
<text x="818.7" y="783.11">NUE</text>
<text x="961.2" y="783.11">OCT</text>
<text x="1059.8" y="783.11">ORI</text>
<text x="1186.2" y="783.11">AMO</text>
<text x="1255.2" y="783.11">DPC</text>
<text x="1328.7" y="783.11">XVI</text>
<text x="1407.9" y="783.11">QUA</text>
<text x="1560.1" y="783.11">AAN</text>
<text x="353.0" y="766.18">TAH</text>
<text x="431.1" y="766.18">JEA</text>
<text x="481.9" y="766.18">JIP</text>
<text x="538.7" y="766.18">PPS</text>
<text x="578.8" y="766.18">ZCS</text>
<text x="633.2" y="766.18">GDR</text>
<text x="971.2" y="766.18">DRA</text>
<text x="1073.2" y="766.18">LUM</text>
<text x="1112.7" y="766.18">RPU</text>
<text x="1176.7" y="766.18">THA</text>
<text x="1259.5" y="766.18">PSU</text>
<text x="1471.1" y="766.18">XCB</text>
<text x="431.7" y="749.65">JRC</text>
<text x="544.2" y="749.65">CAN</text>
<text x="578.3" y="749.65">FAN</text>
<text x="681.3" y="749.65">PER</text>
<text x="1050.2" y="749.65">CTA</text>
<text x="1265.2" y="749.65">HYD</text>
<text x="1481.9" y="749.65">XUM</text>
<text x="441.6" y="733.32">COR</text>
<text x="657.9" y="733.32">SDA</text>
<text x="1049.0" y="733.32">LMI</text>
<text x="1167.0" y="733.32">LEO</text>
<text x="1274.7" y="733.32">EHY</text>
<text x="1500.9" y="733.32">ECV</text>
<text x="603.8" y="716.99">JXA</text>
<text x="716.2" y="716.99">KCG</text>
<text x="1156.9" y="716.99">AND</text>
<text x="1274.7" y="716.99">DAD</text>
<text x="666.8" y="700.66">ERI</text>
<text x="1108.5" y="700.66">SLD</text>
<text x="1211.2" y="700.66">ORS</text>
<text x="1299.2" y="700.66">GEM</text>
<text x="1122.7" y="684.33">KUM</text>
</g>
<g stroke="#ff0000" stroke-width="1.39" stroke-dasharray="5.1 2.2" fill="none">
<path d="M1169.02 842.5 V641.5"/>
<path d="M1171.62 842.5 V641.5"/>
</g>
<rect x="20.5" y="641.5" width="1765.0" height="201.0" fill="none" stroke="#fff" stroke-width="1.1"/>
<path d="M20.50 842.5 v4.9 M265.64 842.5 v4.9 M510.78 842.5 v4.9 M755.92 842.5 v4.9 M1001.06 842.5 v4.9 M1246.19 842.5 v4.9 M1491.33 842.5 v4.9 M1736.47 842.5 v4.9" stroke="#fff" stroke-width="1.1" fill="none"/>
<g font-family="'DejaVu Sans','Liberation Sans',sans-serif" font-size="13.89" fill="#fff" text-anchor="middle">
<text x="20.50" y="862.3">0</text>
<text x="265.64" y="862.3">50</text>
<text x="510.78" y="862.3">100</text>
<text x="755.92" y="862.3">150</text>
<text x="1001.06" y="862.3">200</text>
<text x="1246.19" y="862.3">250</text>
<text x="1491.33" y="862.3">300</text>
<text x="1736.47" y="862.3">350</text>
<text x="902.6" y="881.7">Solar longitude (deg)</text>
</g>
</svg>
</body></html>
